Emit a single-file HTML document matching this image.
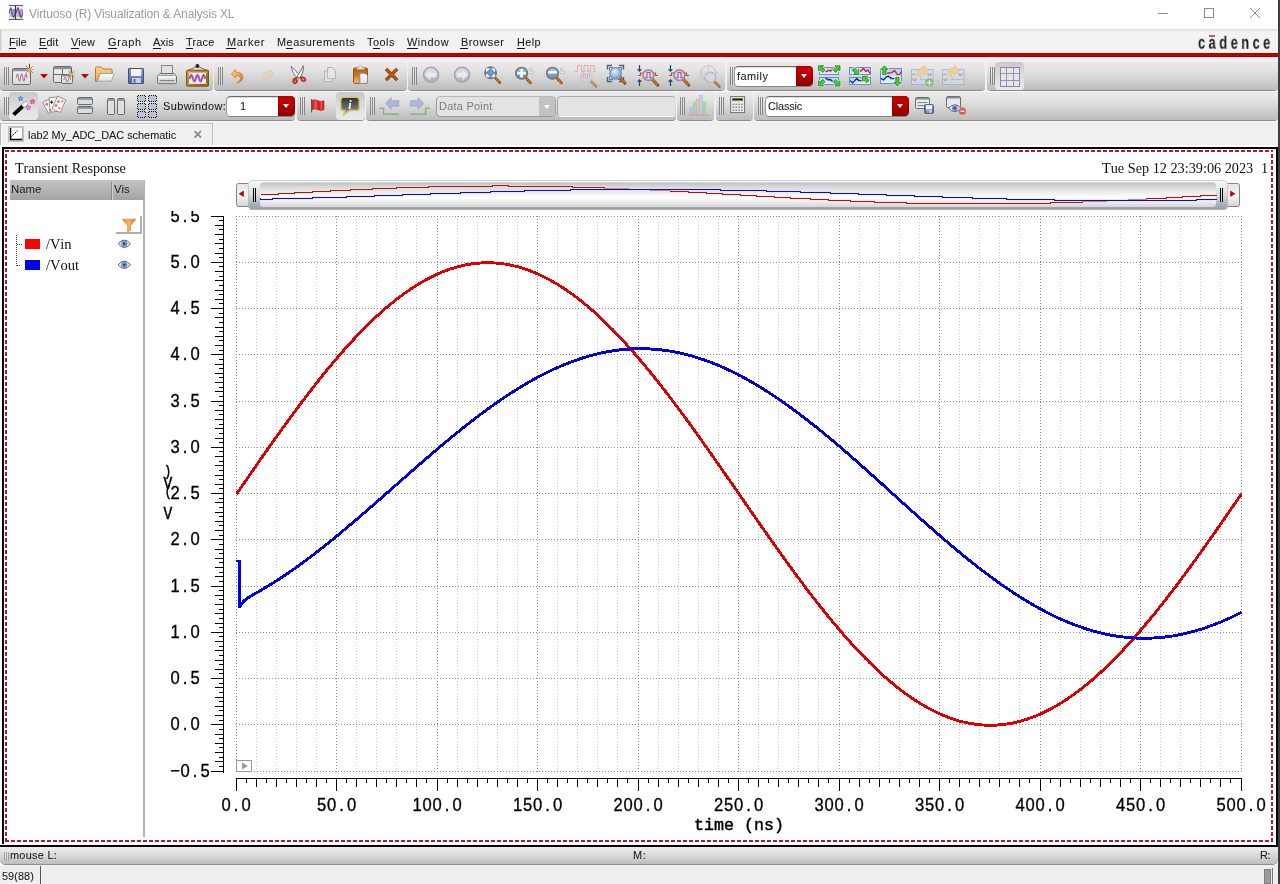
<!DOCTYPE html>
<html lang="en"><head><meta charset="utf-8"><title>Virtuoso (R) Visualization &amp; Analysis XL</title>
<style>
*{box-sizing:border-box}
html,body{margin:0;padding:0}
body{width:1280px;height:884px;overflow:hidden;background:#fff;position:relative;font-family:"Liberation Sans",sans-serif;font-size:11.6px;color:#1a1a1a}
.a{position:absolute}
.t{position:absolute;white-space:nowrap;line-height:1;will-change:transform}
.f{-webkit-text-stroke:.07px currentColor}
svg{will-change:transform}
u{text-decoration:underline;text-underline-offset:1.5px;text-decoration-thickness:1px}
#titlebar{left:0;top:0;width:1280px;height:29px;background:#fff}
#title{left:29px;top:7.5px;font-size:12px;color:#9c9c9c;letter-spacing:-.14px}
#menubar{left:0;top:29px;width:1278px;height:24px;background:linear-gradient(#d9d9d9 0,#eeeeee 2px,#f3f3f3 3px,#f1f1f1 100%)}
.mi{top:36px;font-size:11.6px;color:#1c1c1c}
#redline{left:0;top:51px;width:1278px;height:8px;background:linear-gradient(#f9eded 0px,#f9eded 1px,#ffeaea 1px,#ffeaea 2px,#9b0606 2px,#9b0606 3px,#b90505 3px,#b90505 4px,#bb0404 4px,#bb0404 5px,#9b0606 5px,#9b0606 6px,#ffeaea 6px,#ffeaea 7px,#f8ecec 7px,#f8ecec 8px)}
#tbbg{left:0;top:59px;width:1278px;height:86px;background:#f0f0f0}
.g{position:absolute;border-radius:4px;background:linear-gradient(#eaeaea 0,#e4e4e4 25%,#d3d3d3 60%,#bcbcbc 100%);box-shadow:0 1px 0 #8c8c8c,0 2px 0 #f6f6f6}
.g1{top:62px;height:28px}
.g2{top:92px;height:28px}
.h{position:absolute;width:5px;background:repeating-linear-gradient(90deg,#868686 0,#868686 1px,rgba(255,255,255,.25) 1px,rgba(255,255,255,.25) 2px)}
.h1{top:67px;height:18px}
.h2{top:97px;height:18px}
.pressed{position:absolute;border-radius:4px;background:linear-gradient(#c9c9c9,#d6d6d6 35%,#e6e6e6 80%,#e9e9e9)}
.ic{position:absolute;overflow:visible}
.combo{position:absolute;height:21px;border-radius:4.5px;background:#fff;border:1px solid #858585;border-top-color:#6e6e6e;border-left-color:#9a9a9a;box-shadow:inset 0 1px 0 #dcdcdc}
.combo .btn{position:absolute;right:-1px;top:-.5px;bottom:-.5px;width:16.5px;background:linear-gradient(#c60000,#b80000 45%,#9c0000 80%,#8c0000);border-radius:0 4.5px 4.5px 0;box-shadow:inset 0 0 0 .5px rgba(120,0,0,.6)}
.combo .btn:after{content:"";position:absolute;left:4.4px;top:8.1px;border:3.8px solid transparent;border-top:4.3px solid #fff;border-bottom:0}
.combo .tx{will-change:transform;position:absolute;left:3px;top:4.3px;font-size:11.4px;color:#111;line-height:1;white-space:nowrap}
#tab{left:0;top:123px;width:213px;height:22px;background:#f0f0f0;border-top:1px solid #c3c3c3;border-right:1px solid #bdbdbd;border-left:1px solid #b6b6b6;box-shadow:inset 1px 1px 0 #fbfbfb}
#gw{left:0;top:145px;width:1278px;height:702px;background:#fff}
.serif{font-family:"Liberation Serif",serif;font-kerning:none}
.mono{font-family:"Liberation Mono",monospace}
.ax{will-change:transform;position:absolute;white-space:nowrap;line-height:18px;height:18px;font-family:"Liberation Sans",sans-serif;font-size:16.6px;color:#000;letter-spacing:.77px;-webkit-text-stroke:.3px #000;transform:scaleY(1.125);transform-origin:0 50%}
.ax i,.ax b{display:inline-block;width:10px;text-align:center;font-style:normal;font-weight:normal;letter-spacing:0}
.ax i{-webkit-text-stroke:.8px #000}
#sb1{left:0;top:847px;width:1278px;height:17px;border-radius:0 0 5px 5px;background:linear-gradient(#ededed 0,#e2e2e2 30%,#cfcfcf 70%,#bdbdbd 100%);box-shadow:0 1px 0 #8f8f8f}
#sb2{left:0;top:865px;width:1278px;height:19px;background:#efefef}
</style></head>
<body>
<div id="titlebar" class="a"></div>
<div id="title" class="t">Virtuoso (R) Visualization &amp; Analysis XL</div>
<svg class="a" style="left:1150px;top:0" width="128" height="29" viewBox="0 0 128 29"><g fill="none" stroke="#8a8a8a" stroke-width="1"><path d="M8 13.5h10"/><rect x="54.5" y="8.5" width="9" height="9"/><path d="M100 8l10 10M110 8l-10 10"/></g></svg>
<div id="menubar" class="a"></div><div class="a" style="left:0;top:30px;width:2px;height:21px;background:linear-gradient(90deg,#cbcbcb 0,#cbcbcb 1px,#e2e2e2 1px)"></div>
<div class="t f" style="left:9.11px;top:36.6px;font-size:10.9px;letter-spacing:0.042px;color:#1a1a1a;">File</div><div class="a" style="left:8.7px;top:48px;width:7.5px;height:1px;background:#151515"></div><div class="t f" style="left:39.12px;top:36.6px;font-size:10.9px;letter-spacing:0.149px;color:#1a1a1a;">Edit</div><div class="a" style="left:38.7px;top:48px;width:8.1px;height:1px;background:#151515"></div><div class="t f" style="left:71.24px;top:36.6px;font-size:10.9px;letter-spacing:0.130px;color:#1a1a1a;">View</div><div class="a" style="left:70.8px;top:48px;width:7.9px;height:1px;background:#151515"></div><div class="t f" style="left:108.34px;top:36.6px;font-size:10.9px;letter-spacing:0.669px;color:#1a1a1a;">Graph</div><div class="a" style="left:107.9px;top:48px;width:9.3px;height:1px;background:#151515"></div><div class="t f" style="left:153.20px;top:36.6px;font-size:10.9px;letter-spacing:0.000px;color:#1a1a1a;">Axis</div><div class="a" style="left:152.8px;top:48px;width:8.1px;height:1px;background:#151515"></div><div class="t f" style="left:186.07px;top:36.6px;font-size:10.9px;letter-spacing:0.218px;color:#1a1a1a;">Trace</div><div class="a" style="left:185.7px;top:48px;width:7.1px;height:1px;background:#151515"></div><div class="t f" style="left:226.62px;top:36.6px;font-size:10.9px;letter-spacing:0.708px;color:#1a1a1a;">Marker</div><div class="a" style="left:226.2px;top:48px;width:9.9px;height:1px;background:#151515"></div><div class="t f" style="left:277.15px;top:36.6px;font-size:10.9px;letter-spacing:0.508px;color:#1a1a1a;">Measurements</div><div class="a" style="left:286.3px;top:48px;width:6.9px;height:1px;background:#151515"></div><div class="t f" style="left:367.24px;top:36.6px;font-size:10.9px;letter-spacing:0.496px;color:#1a1a1a;">Tools</div><div class="a" style="left:372.8px;top:48px;width:6.9px;height:1px;background:#151515"></div><div class="t f" style="left:407.06px;top:36.6px;font-size:10.9px;letter-spacing:0.572px;color:#1a1a1a;">Window</div><div class="a" style="left:406.6px;top:48px;width:11.1px;height:1px;background:#151515"></div><div class="t f" style="left:460.82px;top:36.6px;font-size:10.9px;letter-spacing:0.481px;color:#1a1a1a;">Browser</div><div class="a" style="left:460.4px;top:48px;width:8.1px;height:1px;background:#151515"></div><div class="t f" style="left:516.96px;top:36.6px;font-size:10.9px;letter-spacing:0.416px;color:#1a1a1a;">Help</div><div class="a" style="left:516.6px;top:48px;width:8.7px;height:1px;background:#151515"></div>
<div class="t" id="cad" style="left:1198.4px;top:32.6px;font-size:15px;font-weight:bold;letter-spacing:4.02px;color:#1a1a1a;transform:scale(.86,1.22);transform-origin:0 0">cadence</div><div class="a" style="left:1209px;top:35px;width:6px;height:1.5px;background:#c05a64"></div>
<div id="redline" class="a"></div>
<div id="tbbg" class="a"></div>
<div class="g g1" style="left:0px;width:213px"></div><div class="g g1" style="left:214px;width:193px"></div><div class="g g1" style="left:408px;width:317px"></div><div class="g g1" style="left:727px;width:258px"></div><div class="g g1" style="left:987px;width:291px"></div><div class="g g2" style="left:0px;width:295px"></div><div class="g g2" style="left:297px;width:68px"></div><div class="g g2" style="left:366px;width:310px"></div><div class="g g2" style="left:677px;width:37px"></div><div class="g g2" style="left:716px;width:37px"></div><div class="g g2" style="left:754px;width:524px"></div>
<div class="h h1" style="left:4px"></div><div class="h h1" style="left:218px"></div><div class="h h1" style="left:412px"></div><div class="h h1" style="left:730px"></div><div class="h h1" style="left:990px"></div><div class="h h2" style="left:4px"></div><div class="h h2" style="left:300px"></div><div class="h h2" style="left:370px"></div><div class="h h2" style="left:680px"></div><div class="h h2" style="left:719px"></div><div class="h h2" style="left:758px"></div>
<div class="pressed" style="left:995px;top:62px;width:29px;height:28px"></div><div class="pressed" style="left:9px;top:92px;width:29px;height:28px"></div><div class="pressed" style="left:336px;top:92px;width:29px;height:28px"></div>
<div class="t f" style="left:162.72px;top:101.3px;font-size:10.9px;letter-spacing:0.453px;color:#1a1a1a;">Subwindow:</div><div class="combo" style="left:225.8px;top:95.5px;width:69.2px"><div class="tx" style="left:13.6px;font-size:10.9px;top:4.1px">1</div><div class="btn"></div></div><div class="combo" style="left:733.8px;top:65.5px;width:79.2px"><div class="btn"></div></div><div class="t f" style="left:737.02px;top:71.4px;font-size:10.9px;letter-spacing:0.487px;color:#1a1a1a;">family</div><div class="combo" style="left:764.8px;top:95.5px;width:144.2px"><div class="btn"></div></div><div class="t f" style="left:767.94px;top:101.4px;font-size:10.9px;letter-spacing:-0.131px;color:#1a1a1a;">Classic</div><div class="a" style="left:436px;top:95.5px;width:120px;height:21px;border-radius:4.5px;background:#e3e3e3;border:1px solid #9a9a9a;border-top-color:#b9b9b9;border-right-color:#a4a4a4;overflow:hidden"><div class="a" style="right:0;top:0;width:16px;height:20px;background:#c2c2c2"></div><div class="a" style="right:4.6px;top:8.1px;border:3.8px solid transparent;border-top:4.2px solid #fff;border-bottom:0"></div></div><div class="t f" style="left:438.95px;top:101.4px;font-size:10.9px;letter-spacing:0.281px;color:#7f7f7f;">Data Point</div><div class="a" style="left:557px;top:95.5px;width:119px;height:21px;border-radius:4.5px;background:#e3e3e3;border:1px solid #a9a9a9;border-bottom-color:#fbfbfb;border-right-color:#d9d9d9"></div>
<div id="tab" class="a"></div><div class="t f" style="left:28.16px;top:130px;font-size:10.9px;letter-spacing:-0.006px;color:#1a1a1a;">lab2 My_ADC_DAC schematic</div><svg class="a" style="left:192.3px;top:129.4px" width="12" height="12" viewBox="0 0 12 12"><path d="M2.6 2.2l6.4 6.4M9 2.2l-6.4 6.4" stroke="#8a8a8a" stroke-width="1.7" fill="none"/></svg>
<div id="gw" class="a"></div>
<svg class="a" style="left:0;top:0" width="1280" height="884" viewBox="0 0 1280 884"><g shape-rendering="crispEdges"><rect x="2" y="147" width="1276" height="2" fill="#000"/><rect x="2" y="147" width="2" height="697" fill="#000"/><rect x="1276" y="147" width="2" height="700" fill="#000"/><rect x="0" y="845" width="1278" height="2" fill="#000"/><path d="M5 151H1273" stroke="#b01a36" stroke-width="2" stroke-dasharray="4 2" fill="none"/><path d="M5 841H1273" stroke="#b01a36" stroke-width="2" stroke-dasharray="4 2" fill="none"/><path d="M6 154V840" stroke="#b01a36" stroke-width="2" stroke-dasharray="4 2" fill="none"/><path d="M1272 154V840" stroke="#b01a36" stroke-width="2" stroke-dasharray="4 2" fill="none"/><rect x="143" y="180" width="2" height="657" fill="#b4b4b4"/><path d="M236.5 216V772" stroke="#8e8e8e" stroke-width="1" stroke-dasharray="1 2" fill="none"/><path d="M256.5 216V772" stroke="#cbcbcb" stroke-width="1" stroke-dasharray="1 2" fill="none"/><path d="M276.5 216V772" stroke="#cbcbcb" stroke-width="1" stroke-dasharray="1 2" fill="none"/><path d="M296.5 216V772" stroke="#cbcbcb" stroke-width="1" stroke-dasharray="1 2" fill="none"/><path d="M316.5 216V772" stroke="#cbcbcb" stroke-width="1" stroke-dasharray="1 2" fill="none"/><path d="M336.5 216V772" stroke="#8e8e8e" stroke-width="1" stroke-dasharray="1 2" fill="none"/><path d="M356.5 216V772" stroke="#cbcbcb" stroke-width="1" stroke-dasharray="1 2" fill="none"/><path d="M376.5 216V772" stroke="#cbcbcb" stroke-width="1" stroke-dasharray="1 2" fill="none"/><path d="M396.5 216V772" stroke="#cbcbcb" stroke-width="1" stroke-dasharray="1 2" fill="none"/><path d="M416.5 216V772" stroke="#cbcbcb" stroke-width="1" stroke-dasharray="1 2" fill="none"/><path d="M437.5 216V772" stroke="#8e8e8e" stroke-width="1" stroke-dasharray="1 2" fill="none"/><path d="M457.5 216V772" stroke="#cbcbcb" stroke-width="1" stroke-dasharray="1 2" fill="none"/><path d="M477.5 216V772" stroke="#cbcbcb" stroke-width="1" stroke-dasharray="1 2" fill="none"/><path d="M497.5 216V772" stroke="#cbcbcb" stroke-width="1" stroke-dasharray="1 2" fill="none"/><path d="M517.5 216V772" stroke="#cbcbcb" stroke-width="1" stroke-dasharray="1 2" fill="none"/><path d="M537.5 216V772" stroke="#8e8e8e" stroke-width="1" stroke-dasharray="1 2" fill="none"/><path d="M557.5 216V772" stroke="#cbcbcb" stroke-width="1" stroke-dasharray="1 2" fill="none"/><path d="M577.5 216V772" stroke="#cbcbcb" stroke-width="1" stroke-dasharray="1 2" fill="none"/><path d="M597.5 216V772" stroke="#cbcbcb" stroke-width="1" stroke-dasharray="1 2" fill="none"/><path d="M617.5 216V772" stroke="#cbcbcb" stroke-width="1" stroke-dasharray="1 2" fill="none"/><path d="M638.5 216V772" stroke="#8e8e8e" stroke-width="1" stroke-dasharray="1 2" fill="none"/><path d="M658.5 216V772" stroke="#cbcbcb" stroke-width="1" stroke-dasharray="1 2" fill="none"/><path d="M678.5 216V772" stroke="#cbcbcb" stroke-width="1" stroke-dasharray="1 2" fill="none"/><path d="M698.5 216V772" stroke="#cbcbcb" stroke-width="1" stroke-dasharray="1 2" fill="none"/><path d="M718.5 216V772" stroke="#cbcbcb" stroke-width="1" stroke-dasharray="1 2" fill="none"/><path d="M738.5 216V772" stroke="#8e8e8e" stroke-width="1" stroke-dasharray="1 2" fill="none"/><path d="M758.5 216V772" stroke="#cbcbcb" stroke-width="1" stroke-dasharray="1 2" fill="none"/><path d="M778.5 216V772" stroke="#cbcbcb" stroke-width="1" stroke-dasharray="1 2" fill="none"/><path d="M798.5 216V772" stroke="#cbcbcb" stroke-width="1" stroke-dasharray="1 2" fill="none"/><path d="M818.5 216V772" stroke="#cbcbcb" stroke-width="1" stroke-dasharray="1 2" fill="none"/><path d="M839.5 216V772" stroke="#8e8e8e" stroke-width="1" stroke-dasharray="1 2" fill="none"/><path d="M859.5 216V772" stroke="#cbcbcb" stroke-width="1" stroke-dasharray="1 2" fill="none"/><path d="M879.5 216V772" stroke="#cbcbcb" stroke-width="1" stroke-dasharray="1 2" fill="none"/><path d="M899.5 216V772" stroke="#cbcbcb" stroke-width="1" stroke-dasharray="1 2" fill="none"/><path d="M919.5 216V772" stroke="#cbcbcb" stroke-width="1" stroke-dasharray="1 2" fill="none"/><path d="M939.5 216V772" stroke="#8e8e8e" stroke-width="1" stroke-dasharray="1 2" fill="none"/><path d="M959.5 216V772" stroke="#cbcbcb" stroke-width="1" stroke-dasharray="1 2" fill="none"/><path d="M979.5 216V772" stroke="#cbcbcb" stroke-width="1" stroke-dasharray="1 2" fill="none"/><path d="M999.5 216V772" stroke="#cbcbcb" stroke-width="1" stroke-dasharray="1 2" fill="none"/><path d="M1019.5 216V772" stroke="#cbcbcb" stroke-width="1" stroke-dasharray="1 2" fill="none"/><path d="M1040.5 216V772" stroke="#8e8e8e" stroke-width="1" stroke-dasharray="1 2" fill="none"/><path d="M1060.5 216V772" stroke="#cbcbcb" stroke-width="1" stroke-dasharray="1 2" fill="none"/><path d="M1080.5 216V772" stroke="#cbcbcb" stroke-width="1" stroke-dasharray="1 2" fill="none"/><path d="M1100.5 216V772" stroke="#cbcbcb" stroke-width="1" stroke-dasharray="1 2" fill="none"/><path d="M1120.5 216V772" stroke="#cbcbcb" stroke-width="1" stroke-dasharray="1 2" fill="none"/><path d="M1140.5 216V772" stroke="#8e8e8e" stroke-width="1" stroke-dasharray="1 2" fill="none"/><path d="M1160.5 216V772" stroke="#cbcbcb" stroke-width="1" stroke-dasharray="1 2" fill="none"/><path d="M1180.5 216V772" stroke="#cbcbcb" stroke-width="1" stroke-dasharray="1 2" fill="none"/><path d="M1200.5 216V772" stroke="#cbcbcb" stroke-width="1" stroke-dasharray="1 2" fill="none"/><path d="M1220.5 216V772" stroke="#cbcbcb" stroke-width="1" stroke-dasharray="1 2" fill="none"/><path d="M1241.5 216V772" stroke="#8e8e8e" stroke-width="1" stroke-dasharray="1 2" fill="none"/><path d="M236 216.5H1242" stroke="#8e8e8e" stroke-width="1" stroke-dasharray="1 2" fill="none"/><path d="M236 262.5H1242" stroke="#8e8e8e" stroke-width="1" stroke-dasharray="1 2" fill="none"/><path d="M236 308.5H1242" stroke="#8e8e8e" stroke-width="1" stroke-dasharray="1 2" fill="none"/><path d="M236 354.5H1242" stroke="#8e8e8e" stroke-width="1" stroke-dasharray="1 2" fill="none"/><path d="M236 401.5H1242" stroke="#8e8e8e" stroke-width="1" stroke-dasharray="1 2" fill="none"/><path d="M236 447.5H1242" stroke="#8e8e8e" stroke-width="1" stroke-dasharray="1 2" fill="none"/><path d="M236 493.5H1242" stroke="#8e8e8e" stroke-width="1" stroke-dasharray="1 2" fill="none"/><path d="M236 539.5H1242" stroke="#8e8e8e" stroke-width="1" stroke-dasharray="1 2" fill="none"/><path d="M236 586.5H1242" stroke="#8e8e8e" stroke-width="1" stroke-dasharray="1 2" fill="none"/><path d="M236 632.5H1242" stroke="#8e8e8e" stroke-width="1" stroke-dasharray="1 2" fill="none"/><path d="M236 678.5H1242" stroke="#8e8e8e" stroke-width="1" stroke-dasharray="1 2" fill="none"/><path d="M236 724.5H1242" stroke="#8e8e8e" stroke-width="1" stroke-dasharray="1 2" fill="none"/><path d="M236 771.5H1242" stroke="#8e8e8e" stroke-width="1" stroke-dasharray="1 2" fill="none"/><path d="M223.5 216V773M211 216.5H224M219 220.5H224M215 225.5H224M219 229.5H224M215 234.5H224M219 239.5H224M215 243.5H224M219 248.5H224M215 253.5H224M219 257.5H224M211 262.5H224M219 266.5H224M215 271.5H224M219 276.5H224M215 280.5H224M219 285.5H224M215 290.5H224M219 294.5H224M215 299.5H224M219 303.5H224M211 308.5H224M219 313.5H224M215 317.5H224M219 322.5H224M215 327.5H224M219 331.5H224M215 336.5H224M219 340.5H224M215 345.5H224M219 350.5H224M211 354.5H224M219 359.5H224M215 364.5H224M219 368.5H224M215 373.5H224M219 377.5H224M215 382.5H224M219 387.5H224M215 391.5H224M219 396.5H224M211 401.5H224M219 405.5H224M215 410.5H224M219 414.5H224M215 419.5H224M219 424.5H224M215 428.5H224M219 433.5H224M215 438.5H224M219 442.5H224M211 447.5H224M219 451.5H224M215 456.5H224M219 461.5H224M215 465.5H224M219 470.5H224M215 475.5H224M219 479.5H224M215 484.5H224M219 488.5H224M211 493.5H224M219 498.5H224M215 502.5H224M219 507.5H224M215 512.5H224M219 516.5H224M215 521.5H224M219 525.5H224M215 530.5H224M219 535.5H224M211 539.5H224M219 544.5H224M215 549.5H224M219 553.5H224M215 558.5H224M219 562.5H224M215 567.5H224M219 572.5H224M215 576.5H224M219 581.5H224M211 586.5H224M219 590.5H224M215 595.5H224M219 599.5H224M215 604.5H224M219 609.5H224M215 613.5H224M219 618.5H224M215 623.5H224M219 627.5H224M211 632.5H224M219 636.5H224M215 641.5H224M219 646.5H224M215 650.5H224M219 655.5H224M215 660.5H224M219 664.5H224M215 669.5H224M219 673.5H224M211 678.5H224M219 683.5H224M215 687.5H224M219 692.5H224M215 697.5H224M219 701.5H224M215 706.5H224M219 710.5H224M215 715.5H224M219 720.5H224M211 724.5H224M219 729.5H224M215 734.5H224M219 738.5H224M215 743.5H224M219 747.5H224M215 752.5H224M219 757.5H224M215 761.5H224M219 766.5H224M211 771.5H224" stroke="#000" stroke-width="1" fill="none"/><path d="M236 778.5H1242M236.5 778V791M246.5 778V783M256.5 778V787M266.5 778V783M276.5 778V787M286.5 778V783M296.5 778V787M306.5 778V783M316.5 778V787M326.5 778V783M336.5 778V791M346.5 778V783M356.5 778V787M366.5 778V783M376.5 778V787M386.5 778V783M396.5 778V787M406.5 778V783M416.5 778V787M426.5 778V783M437.5 778V791M447.5 778V783M457.5 778V787M467.5 778V783M477.5 778V787M487.5 778V783M497.5 778V787M507.5 778V783M517.5 778V787M527.5 778V783M537.5 778V791M547.5 778V783M557.5 778V787M567.5 778V783M577.5 778V787M587.5 778V783M597.5 778V787M607.5 778V783M617.5 778V787M627.5 778V783M638.5 778V791M648.5 778V783M658.5 778V787M668.5 778V783M678.5 778V787M688.5 778V783M698.5 778V787M708.5 778V783M718.5 778V787M728.5 778V783M738.5 778V791M748.5 778V783M758.5 778V787M768.5 778V783M778.5 778V787M788.5 778V783M798.5 778V787M808.5 778V783M818.5 778V787M828.5 778V783M839.5 778V791M849.5 778V783M859.5 778V787M869.5 778V783M879.5 778V787M889.5 778V783M899.5 778V787M909.5 778V783M919.5 778V787M929.5 778V783M939.5 778V791M949.5 778V783M959.5 778V787M969.5 778V783M979.5 778V787M989.5 778V783M999.5 778V787M1009.5 778V783M1019.5 778V787M1029.5 778V783M1040.5 778V791M1050.5 778V783M1060.5 778V787M1070.5 778V783M1080.5 778V787M1090.5 778V783M1100.5 778V787M1110.5 778V783M1120.5 778V787M1130.5 778V783M1140.5 778V791M1150.5 778V783M1160.5 778V787M1170.5 778V783M1180.5 778V787M1190.5 778V783M1200.5 778V787M1210.5 778V783M1220.5 778V787M1230.5 778V783M1241.5 778V791" stroke="#000" stroke-width="1" fill="none"/></g><clipPath id="plotclip"><rect x="236" y="210" width="1006" height="566"/></clipPath><g clip-path="url(#plotclip)" shape-rendering="crispEdges" fill="none" stroke-width="2.9" stroke-linejoin="bevel"><path d="M236.5,494.0 237.9,491.9 239.4,489.8 240.8,487.8 242.2,485.7 243.7,483.6 245.1,481.6 246.6,479.5 248.0,477.4 249.4,475.3 250.9,473.3 252.3,471.2 253.7,469.1 255.2,467.1 256.6,465.0 258.0,463.0 259.5,460.9 260.9,458.8 262.3,456.8 263.8,454.8 265.2,452.7 266.6,450.7 268.1,448.6 269.5,446.6 271.0,444.6 272.4,442.5 273.8,440.5 275.3,438.5 276.7,436.5 278.1,434.5 279.6,432.5 281.0,430.5 282.4,428.5 283.9,426.5 285.3,424.5 286.8,422.5 288.2,420.6 289.6,418.6 291.1,416.6 292.5,414.7 293.9,412.7 295.4,410.8 296.8,408.9 298.2,406.9 299.7,405.0 301.1,403.1 302.5,401.2 304.0,399.3 305.4,397.4 306.9,395.5 308.3,393.7 309.7,391.8 311.2,389.9 312.6,388.1 314.0,386.3 315.5,384.4 316.9,382.6 318.3,380.8 319.8,379.0 321.2,377.2 322.6,375.4 324.1,373.6 325.5,371.8 326.9,370.1 328.4,368.3 329.8,366.6 331.3,364.9 332.7,363.2 334.1,361.5 335.6,359.8 337.0,358.1 338.4,356.4 339.9,354.7 341.3,353.1 342.7,351.4 344.2,349.8 345.6,348.2 347.0,346.6 348.5,345.0 349.9,343.4 351.4,341.9 352.8,340.3 354.2,338.8 355.7,337.2 357.1,335.7 358.5,334.2 360.0,332.7 361.4,331.2 362.8,329.7 364.3,328.3 365.7,326.9 367.1,325.4 368.6,324.0 370.0,322.6 371.5,321.2 372.9,319.9 374.3,318.5 375.8,317.1 377.2,315.8 378.6,314.5 380.1,313.2 381.5,311.9 382.9,310.6 384.4,309.4 385.8,308.1 387.2,306.9 388.7,305.7 390.1,304.5 391.6,303.3 393.0,302.2 394.4,301.0 395.9,299.9 397.3,298.7 398.7,297.6 400.2,296.6 401.6,295.5 403.0,294.4 404.5,293.4 405.9,292.4 407.4,291.4 408.8,290.4 410.2,289.4 411.7,288.4 413.1,287.5 414.5,286.6 416.0,285.7 417.4,284.8 418.8,283.9 420.3,283.0 421.7,282.2 423.1,281.4 424.6,280.6 426.0,279.8 427.4,279.0 428.9,278.2 430.3,277.5 431.8,276.8 433.2,276.1 434.6,275.4 436.1,274.7 437.5,274.1 438.9,273.4 440.4,272.8 441.8,272.2 443.2,271.6 444.7,271.1 446.1,270.5 447.5,270.0 449.0,269.5 450.4,269.0 451.9,268.5 453.3,268.1 454.7,267.7 456.2,267.2 457.6,266.8 459.0,266.5 460.5,266.1 461.9,265.8 463.3,265.4 464.8,265.1 466.2,264.8 467.6,264.6 469.1,264.3 470.5,264.1 472.0,263.9 473.4,263.7 474.8,263.5 476.3,263.3 477.7,263.2 479.1,263.1 480.6,263.0 482.0,262.9 483.4,262.8 484.9,262.8 486.3,262.8 487.8,262.8 489.2,262.8 490.6,262.8 492.1,262.8 493.5,262.9 494.9,263.0 496.4,263.1 497.8,263.2 499.2,263.3 500.7,263.5 502.1,263.7 503.5,263.9 505.0,264.1 506.4,264.3 507.8,264.6 509.3,264.8 510.7,265.1 512.2,265.4 513.6,265.8 515.0,266.1 516.5,266.5 517.9,266.8 519.3,267.2 520.8,267.7 522.2,268.1 523.6,268.5 525.1,269.0 526.5,269.5 528.0,270.0 529.4,270.5 530.8,271.1 532.3,271.6 533.7,272.2 535.1,272.8 536.6,273.4 538.0,274.1 539.4,274.7 540.9,275.4 542.3,276.1 543.7,276.8 545.2,277.5 546.6,278.2 548.0,279.0 549.5,279.8 550.9,280.6 552.4,281.4 553.8,282.2 555.2,283.0 556.7,283.9 558.1,284.8 559.5,285.7 561.0,286.6 562.4,287.5 563.8,288.4 565.3,289.4 566.7,290.4 568.1,291.4 569.6,292.4 571.0,293.4 572.5,294.4 573.9,295.5 575.3,296.6 576.8,297.6 578.2,298.7 579.6,299.9 581.1,301.0 582.5,302.2 583.9,303.3 585.4,304.5 586.8,305.7 588.2,306.9 589.7,308.1 591.1,309.4 592.6,310.6 594.0,311.9 595.4,313.2 596.9,314.5 598.3,315.8 599.7,317.1 601.2,318.5 602.6,319.9 604.0,321.2 605.5,322.6 606.9,324.0 608.3,325.4 609.8,326.9 611.2,328.3 612.7,329.7 614.1,331.2 615.5,332.7 617.0,334.2 618.4,335.7 619.8,337.2 621.3,338.8 622.7,340.3 624.1,341.9 625.6,343.4 627.0,345.0 628.4,346.6 629.9,348.2 631.3,349.8 632.8,351.4 634.2,353.1 635.6,354.7 637.1,356.4 638.5,358.1 639.9,359.8 641.4,361.5 642.8,363.2 644.2,364.9 645.7,366.6 647.1,368.3 648.5,370.1 650.0,371.8 651.4,373.6 652.9,375.4 654.3,377.2 655.7,379.0 657.2,380.8 658.6,382.6 660.0,384.4 661.5,386.3 662.9,388.1 664.3,389.9 665.8,391.8 667.2,393.7 668.6,395.5 670.1,397.4 671.5,399.3 673.0,401.2 674.4,403.1 675.8,405.0 677.3,406.9 678.7,408.9 680.1,410.8 681.6,412.7 683.0,414.7 684.4,416.6 685.9,418.6 687.3,420.6 688.8,422.5 690.2,424.5 691.6,426.5 693.1,428.5 694.5,430.5 695.9,432.5 697.4,434.5 698.8,436.5 700.2,438.5 701.7,440.5 703.1,442.5 704.5,444.6 706.0,446.6 707.4,448.6 708.8,450.7 710.3,452.7 711.7,454.8 713.2,456.8 714.6,458.8 716.0,460.9 717.5,463.0 718.9,465.0 720.3,467.1 721.8,469.1 723.2,471.2 724.6,473.3 726.1,475.3 727.5,477.4 728.9,479.5 730.4,481.6 731.8,483.6 733.3,485.7 734.7,487.8 736.1,489.8 737.6,491.9 739.0,494.0 740.4,496.1 741.9,498.2 743.3,500.2 744.7,502.3 746.2,504.4 747.6,506.4 749.0,508.5 750.5,510.6 751.9,512.7 753.4,514.7 754.8,516.8 756.2,518.9 757.7,520.9 759.1,523.0 760.5,525.0 762.0,527.1 763.4,529.2 764.8,531.2 766.3,533.2 767.7,535.3 769.1,537.3 770.6,539.4 772.0,541.4 773.5,543.4 774.9,545.5 776.3,547.5 777.8,549.5 779.2,551.5 780.6,553.5 782.1,555.5 783.5,557.5 784.9,559.5 786.4,561.5 787.8,563.5 789.2,565.5 790.7,567.4 792.1,569.4 793.6,571.4 795.0,573.3 796.4,575.3 797.9,577.2 799.3,579.1 800.7,581.1 802.2,583.0 803.6,584.9 805.0,586.8 806.5,588.7 807.9,590.6 809.3,592.5 810.8,594.3 812.2,596.2 813.7,598.1 815.1,599.9 816.5,601.7 818.0,603.6 819.4,605.4 820.8,607.2 822.3,609.0 823.7,610.8 825.1,612.6 826.6,614.4 828.0,616.2 829.4,617.9 830.9,619.7 832.3,621.4 833.8,623.1 835.2,624.8 836.6,626.5 838.1,628.2 839.5,629.9 840.9,631.6 842.4,633.3 843.8,634.9 845.2,636.6 846.7,638.2 848.1,639.8 849.5,641.4 851.0,643.0 852.4,644.6 853.9,646.1 855.3,647.7 856.7,649.2 858.2,650.8 859.6,652.3 861.0,653.8 862.5,655.3 863.9,656.8 865.3,658.3 866.8,659.7 868.2,661.1 869.6,662.6 871.1,664.0 872.5,665.4 874.0,666.8 875.4,668.1 876.8,669.5 878.3,670.9 879.7,672.2 881.1,673.5 882.6,674.8 884.0,676.1 885.4,677.4 886.9,678.6 888.3,679.9 889.7,681.1 891.2,682.3 892.6,683.5 894.1,684.7 895.5,685.8 896.9,687.0 898.4,688.1 899.8,689.3 901.2,690.4 902.7,691.4 904.1,692.5 905.5,693.6 907.0,694.6 908.4,695.6 909.8,696.6 911.3,697.6 912.7,698.6 914.2,699.6 915.6,700.5 917.0,701.4 918.5,702.3 919.9,703.2 921.3,704.1 922.8,705.0 924.2,705.8 925.6,706.6 927.1,707.4 928.5,708.2 929.9,709.0 931.4,709.8 932.8,710.5 934.3,711.2 935.7,711.9 937.1,712.6 938.6,713.3 940.0,713.9 941.4,714.6 942.9,715.2 944.3,715.8 945.7,716.4 947.2,716.9 948.6,717.5 950.0,718.0 951.5,718.5 952.9,719.0 954.4,719.5 955.8,719.9 957.2,720.3 958.7,720.8 960.1,721.2 961.5,721.5 963.0,721.9 964.4,722.2 965.8,722.6 967.3,722.9 968.7,723.2 970.1,723.4 971.6,723.7 973.0,723.9 974.5,724.1 975.9,724.3 977.3,724.5 978.8,724.7 980.2,724.8 981.6,724.9 983.1,725.0 984.5,725.1 985.9,725.2 987.4,725.2 988.8,725.2 990.2,725.2 991.7,725.2 993.1,725.2 994.6,725.2 996.0,725.1 997.4,725.0 998.9,724.9 1000.3,724.8 1001.7,724.7 1003.2,724.5 1004.6,724.3 1006.0,724.1 1007.5,723.9 1008.9,723.7 1010.3,723.4 1011.8,723.2 1013.2,722.9 1014.7,722.6 1016.1,722.2 1017.5,721.9 1019.0,721.5 1020.4,721.2 1021.8,720.8 1023.3,720.3 1024.7,719.9 1026.1,719.5 1027.6,719.0 1029.0,718.5 1030.4,718.0 1031.9,717.5 1033.3,716.9 1034.8,716.4 1036.2,715.8 1037.6,715.2 1039.1,714.6 1040.5,713.9 1041.9,713.3 1043.4,712.6 1044.8,711.9 1046.2,711.2 1047.7,710.5 1049.1,709.8 1050.5,709.0 1052.0,708.2 1053.4,707.4 1054.9,706.6 1056.3,705.8 1057.7,705.0 1059.2,704.1 1060.6,703.2 1062.0,702.3 1063.5,701.4 1064.9,700.5 1066.3,699.6 1067.8,698.6 1069.2,697.6 1070.6,696.6 1072.1,695.6 1073.5,694.6 1075.0,693.6 1076.4,692.5 1077.8,691.4 1079.3,690.4 1080.7,689.3 1082.1,688.1 1083.6,687.0 1085.0,685.8 1086.4,684.7 1087.9,683.5 1089.3,682.3 1090.8,681.1 1092.2,679.9 1093.6,678.6 1095.1,677.4 1096.5,676.1 1097.9,674.8 1099.4,673.5 1100.8,672.2 1102.2,670.9 1103.7,669.5 1105.1,668.1 1106.5,666.8 1108.0,665.4 1109.4,664.0 1110.8,662.6 1112.3,661.1 1113.7,659.7 1115.2,658.3 1116.6,656.8 1118.0,655.3 1119.5,653.8 1120.9,652.3 1122.3,650.8 1123.8,649.2 1125.2,647.7 1126.6,646.1 1128.1,644.6 1129.5,643.0 1130.9,641.4 1132.4,639.8 1133.8,638.2 1135.3,636.6 1136.7,634.9 1138.1,633.3 1139.6,631.6 1141.0,629.9 1142.4,628.2 1143.9,626.5 1145.3,624.8 1146.7,623.1 1148.2,621.4 1149.6,619.7 1151.0,617.9 1152.5,616.2 1153.9,614.4 1155.4,612.6 1156.8,610.8 1158.2,609.0 1159.7,607.2 1161.1,605.4 1162.5,603.6 1164.0,601.7 1165.4,599.9 1166.8,598.1 1168.3,596.2 1169.7,594.3 1171.1,592.5 1172.6,590.6 1174.0,588.7 1175.5,586.8 1176.9,584.9 1178.3,583.0 1179.8,581.1 1181.2,579.1 1182.6,577.2 1184.1,575.3 1185.5,573.3 1186.9,571.4 1188.4,569.4 1189.8,567.4 1191.2,565.5 1192.7,563.5 1194.1,561.5 1195.6,559.5 1197.0,557.5 1198.4,555.5 1199.9,553.5 1201.3,551.5 1202.7,549.5 1204.2,547.5 1205.6,545.5 1207.0,543.4 1208.5,541.4 1209.9,539.4 1211.3,537.3 1212.8,535.3 1214.2,533.2 1215.7,531.2 1217.1,529.2 1218.5,527.1 1220.0,525.0 1221.4,523.0 1222.8,520.9 1224.3,518.9 1225.7,516.8 1227.1,514.7 1228.6,512.7 1230.0,510.6 1231.4,508.5 1232.9,506.4 1234.3,504.4 1235.8,502.3 1237.2,500.2 1238.6,498.2 1240.1,496.1 1241.5,494.0" stroke="#de0000"/><path d="M239.5,606.5 239.7,607.0 240.8,604.9 241.9,603.3 243.1,602.0 244.2,600.8 245.3,599.9 246.4,599.0 247.5,598.2 248.6,597.5 249.7,596.8 250.8,596.1 252.0,595.5 253.1,594.8 254.2,594.2 255.3,593.5 256.4,592.9 257.5,592.3 258.6,591.6 259.8,591.0 260.9,590.3 262.0,589.7 263.1,589.0 264.2,588.4 265.3,587.7 266.4,587.0 267.5,586.4 268.7,585.7 269.8,585.0 270.9,584.3 272.0,583.6 273.1,582.9 274.2,582.2 275.3,581.5 276.4,580.8 277.6,580.1 278.7,579.4 279.8,578.6 280.9,577.9 282.0,577.2 283.1,576.4 284.2,575.7 285.4,574.9 286.5,574.2 287.6,573.4 288.7,572.7 289.8,571.9 290.9,571.1 292.0,570.3 293.1,569.6 294.3,568.8 295.4,568.0 296.5,567.2 297.6,566.4 298.7,565.6 299.8,564.8 300.9,564.0 302.0,563.2 303.2,562.4 304.3,561.5 305.4,560.7 306.5,559.9 307.6,559.0 308.7,558.2 309.8,557.4 311.0,556.5 312.1,555.7 313.2,554.8 314.3,554.0 315.4,553.1 316.5,552.3 317.6,551.4 318.7,550.5 319.9,549.7 321.0,548.8 322.1,547.9 323.2,547.0 324.3,546.1 325.4,545.2 326.5,544.4 327.7,543.5 328.8,542.6 329.9,541.7 331.0,540.8 332.1,539.9 333.2,539.0 334.3,538.1 335.4,537.1 336.6,536.2 337.7,535.3 338.8,534.4 339.9,533.5 341.0,532.5 342.1,531.6 343.2,530.7 344.3,529.8 345.5,528.8 346.6,527.9 347.7,527.0 348.8,526.0 349.9,525.1 351.0,524.1 352.1,523.2 353.3,522.2 354.4,521.3 355.5,520.3 356.6,519.4 357.7,518.4 358.8,517.5 359.9,516.5 361.0,515.6 362.2,514.6 363.3,513.6 364.4,512.7 365.5,511.7 366.6,510.8 367.7,509.8 368.8,508.8 369.9,507.9 371.1,506.9 372.2,505.9 373.3,504.9 374.4,504.0 375.5,503.0 376.6,502.0 377.7,501.1 378.9,500.1 380.0,499.1 381.1,498.1 382.2,497.1 383.3,496.2 384.4,495.2 385.5,494.2 386.6,493.2 387.8,492.3 388.9,491.3 390.0,490.3 391.1,489.3 392.2,488.3 393.3,487.4 394.4,486.4 395.5,485.4 396.7,484.4 397.8,483.4 398.9,482.5 400.0,481.5 401.1,480.5 402.2,479.5 403.3,478.5 404.5,477.6 405.6,476.6 406.7,475.6 407.8,474.6 408.9,473.7 410.0,472.7 411.1,471.7 412.2,470.7 413.4,469.8 414.5,468.8 415.6,467.8 416.7,466.8 417.8,465.9 418.9,464.9 420.0,463.9 421.2,463.0 422.3,462.0 423.4,461.0 424.5,460.1 425.6,459.1 426.7,458.2 427.8,457.2 428.9,456.3 430.1,455.3 431.2,454.3 432.3,453.4 433.4,452.4 434.5,451.5 435.6,450.6 436.7,449.6 437.8,448.7 439.0,447.7 440.1,446.8 441.2,445.8 442.3,444.9 443.4,444.0 444.5,443.1 445.6,442.1 446.8,441.2 447.9,440.3 449.0,439.4 450.1,438.4 451.2,437.5 452.3,436.6 453.4,435.7 454.5,434.8 455.7,433.9 456.8,433.0 457.9,432.1 459.0,431.2 460.1,430.3 461.2,429.4 462.3,428.5 463.4,427.6 464.6,426.7 465.7,425.9 466.8,425.0 467.9,424.1 469.0,423.2 470.1,422.4 471.2,421.5 472.4,420.6 473.5,419.8 474.6,418.9 475.7,418.1 476.8,417.2 477.9,416.4 479.0,415.5 480.1,414.7 481.3,413.9 482.4,413.0 483.5,412.2 484.6,411.4 485.7,410.6 486.8,409.8 487.9,409.0 489.0,408.1 490.2,407.3 491.3,406.5 492.4,405.8 493.5,405.0 494.6,404.2 495.7,403.4 496.8,402.6 498.0,401.8 499.1,401.1 500.2,400.3 501.3,399.5 502.4,398.8 503.5,398.0 504.6,397.3 505.7,396.5 506.9,395.8 508.0,395.1 509.1,394.3 510.2,393.6 511.3,392.9 512.4,392.2 513.5,391.5 514.7,390.8 515.8,390.1 516.9,389.4 518.0,388.7 519.1,388.0 520.2,387.3 521.3,386.6 522.4,386.0 523.6,385.3 524.7,384.6 525.8,384.0 526.9,383.3 528.0,382.7 529.1,382.0 530.2,381.4 531.3,380.8 532.5,380.2 533.6,379.5 534.7,378.9 535.8,378.3 536.9,377.7 538.0,377.1 539.1,376.5 540.3,375.9 541.4,375.4 542.5,374.8 543.6,374.2 544.7,373.7 545.8,373.1 546.9,372.5 548.0,372.0 549.2,371.5 550.3,370.9 551.4,370.4 552.5,369.9 553.6,369.3 554.7,368.8 555.8,368.3 556.9,367.8 558.1,367.3 559.2,366.8 560.3,366.4 561.4,365.9 562.5,365.4 563.6,365.0 564.7,364.5 565.9,364.0 567.0,363.6 568.1,363.2 569.2,362.7 570.3,362.3 571.4,361.9 572.5,361.5 573.6,361.1 574.8,360.7 575.9,360.3 577.0,359.9 578.1,359.5 579.2,359.1 580.3,358.7 581.4,358.4 582.5,358.0 583.7,357.7 584.8,357.3 585.9,357.0 587.0,356.7 588.1,356.3 589.2,356.0 590.3,355.7 591.5,355.4 592.6,355.1 593.7,354.8 594.8,354.5 595.9,354.3 597.0,354.0 598.1,353.7 599.2,353.5 600.4,353.2 601.5,353.0 602.6,352.7 603.7,352.5 604.8,352.3 605.9,352.1 607.0,351.8 608.1,351.6 609.3,351.4 610.4,351.3 611.5,351.1 612.6,350.9 613.7,350.7 614.8,350.6 615.9,350.4 617.1,350.3 618.2,350.1 619.3,350.0 620.4,349.8 621.5,349.7 622.6,349.6 623.7,349.5 624.8,349.4 626.0,349.3 627.1,349.2 628.2,349.1 629.3,349.1 630.4,349.0 631.5,348.9 632.6,348.9 633.8,348.8 634.9,348.8 636.0,348.8 637.1,348.7 638.2,348.7 639.3,348.7 640.4,348.7 641.5,348.7 642.7,348.7 643.8,348.7 644.9,348.8 646.0,348.8 647.1,348.8 648.2,348.9 649.3,348.9 650.4,349.0 651.6,349.1 652.7,349.1 653.8,349.2 654.9,349.3 656.0,349.4 657.1,349.5 658.2,349.6 659.4,349.7 660.5,349.8 661.6,350.0 662.7,350.1 663.8,350.2 664.9,350.4 666.0,350.5 667.1,350.7 668.3,350.9 669.4,351.0 670.5,351.2 671.6,351.4 672.7,351.6 673.8,351.8 674.9,352.0 676.0,352.2 677.2,352.5 678.3,352.7 679.4,352.9 680.5,353.2 681.6,353.4 682.7,353.7 683.8,353.9 685.0,354.2 686.1,354.5 687.2,354.8 688.3,355.1 689.4,355.4 690.5,355.7 691.6,356.0 692.7,356.3 693.9,356.6 695.0,357.0 696.1,357.3 697.2,357.6 698.3,358.0 699.4,358.3 700.5,358.7 701.6,359.1 702.8,359.4 703.9,359.8 705.0,360.2 706.1,360.6 707.2,361.0 708.3,361.4 709.4,361.8 710.6,362.3 711.7,362.7 712.8,363.1 713.9,363.6 715.0,364.0 716.1,364.5 717.2,364.9 718.3,365.4 719.5,365.9 720.6,366.3 721.7,366.8 722.8,367.3 723.9,367.8 725.0,368.3 726.1,368.8 727.3,369.3 728.4,369.8 729.5,370.4 730.6,370.9 731.7,371.4 732.8,372.0 733.9,372.5 735.0,373.1 736.2,373.6 737.3,374.2 738.4,374.8 739.5,375.4 740.6,375.9 741.7,376.5 742.8,377.1 743.9,377.7 745.1,378.3 746.2,379.0 747.3,379.6 748.4,380.2 749.5,380.8 750.6,381.5 751.7,382.1 752.9,382.7 754.0,383.4 755.1,384.0 756.2,384.7 757.3,385.4 758.4,386.0 759.5,386.7 760.6,387.4 761.8,388.1 762.9,388.8 764.0,389.5 765.1,390.2 766.2,390.9 767.3,391.6 768.4,392.3 769.5,393.0 770.7,393.8 771.8,394.5 772.9,395.2 774.0,396.0 775.1,396.7 776.2,397.5 777.3,398.2 778.5,399.0 779.6,399.7 780.7,400.5 781.8,401.3 782.9,402.0 784.0,402.8 785.1,403.6 786.2,404.4 787.4,405.2 788.5,406.0 789.6,406.8 790.7,407.6 791.8,408.4 792.9,409.2 794.0,410.1 795.1,410.9 796.3,411.7 797.4,412.5 798.5,413.4 799.6,414.2 800.7,415.1 801.8,415.9 802.9,416.8 804.1,417.6 805.2,418.5 806.3,419.3 807.4,420.2 808.5,421.1 809.6,421.9 810.7,422.8 811.8,423.7 813.0,424.6 814.1,425.5 815.2,426.3 816.3,427.2 817.4,428.1 818.5,429.0 819.6,429.9 820.8,430.8 821.9,431.7 823.0,432.7 824.1,433.6 825.2,434.5 826.3,435.4 827.4,436.3 828.5,437.3 829.7,438.2 830.8,439.1 831.9,440.0 833.0,441.0 834.1,441.9 835.2,442.9 836.3,443.8 837.4,444.7 838.6,445.7 839.7,446.6 840.8,447.6 841.9,448.6 843.0,449.5 844.1,450.5 845.2,451.4 846.4,452.4 847.5,453.4 848.6,454.3 849.7,455.3 850.8,456.3 851.9,457.2 853.0,458.2 854.1,459.2 855.3,460.2 856.4,461.1 857.5,462.1 858.6,463.1 859.7,464.1 860.8,465.1 861.9,466.1 863.0,467.1 864.2,468.0 865.3,469.0 866.4,470.0 867.5,471.0 868.6,472.0 869.7,473.0 870.8,474.0 872.0,475.0 873.1,476.0 874.2,477.0 875.3,478.0 876.4,479.0 877.5,480.0 878.6,481.0 879.7,482.0 880.9,483.0 882.0,484.0 883.1,485.0 884.2,486.0 885.3,487.0 886.4,488.0 887.5,489.0 888.6,490.0 889.8,491.0 890.9,492.0 892.0,493.1 893.1,494.1 894.2,495.1 895.3,496.1 896.4,497.1 897.6,498.1 898.7,499.1 899.8,500.1 900.9,501.1 902.0,502.1 903.1,503.1 904.2,504.1 905.3,505.1 906.5,506.1 907.6,507.1 908.7,508.1 909.8,509.1 910.9,510.1 912.0,511.1 913.1,512.1 914.3,513.1 915.4,514.1 916.5,515.1 917.6,516.1 918.7,517.1 919.8,518.1 920.9,519.1 922.0,520.1 923.2,521.0 924.3,522.0 925.4,523.0 926.5,524.0 927.6,525.0 928.7,526.0 929.8,526.9 930.9,527.9 932.1,528.9 933.2,529.9 934.3,530.8 935.4,531.8 936.5,532.8 937.6,533.8 938.7,534.7 939.9,535.7 941.0,536.6 942.1,537.6 943.2,538.6 944.3,539.5 945.4,540.5 946.5,541.4 947.6,542.4 948.8,543.3 949.9,544.3 951.0,545.2 952.1,546.1 953.2,547.1 954.3,548.0 955.4,548.9 956.5,549.9 957.7,550.8 958.8,551.7 959.9,552.6 961.0,553.5 962.1,554.5 963.2,555.4 964.3,556.3 965.5,557.2 966.6,558.1 967.7,559.0 968.8,559.9 969.9,560.8 971.0,561.7 972.1,562.5 973.2,563.4 974.4,564.3 975.5,565.2 976.6,566.0 977.7,566.9 978.8,567.8 979.9,568.6 981.0,569.5 982.1,570.4 983.3,571.2 984.4,572.1 985.5,572.9 986.6,573.7 987.7,574.6 988.8,575.4 989.9,576.2 991.1,577.1 992.2,577.9 993.3,578.7 994.4,579.5 995.5,580.3 996.6,581.1 997.7,581.9 998.8,582.7 1000.0,583.5 1001.1,584.3 1002.2,585.1 1003.3,585.8 1004.4,586.6 1005.5,587.4 1006.6,588.1 1007.8,588.9 1008.9,589.7 1010.0,590.4 1011.1,591.1 1012.2,591.9 1013.3,592.6 1014.4,593.4 1015.5,594.1 1016.7,594.8 1017.8,595.5 1018.9,596.2 1020.0,596.9 1021.1,597.6 1022.2,598.3 1023.3,599.0 1024.4,599.7 1025.6,600.4 1026.7,601.1 1027.8,601.7 1028.9,602.4 1030.0,603.1 1031.1,603.7 1032.2,604.4 1033.4,605.0 1034.5,605.6 1035.6,606.3 1036.7,606.9 1037.8,607.5 1038.9,608.1 1040.0,608.8 1041.1,609.4 1042.3,610.0 1043.4,610.6 1044.5,611.1 1045.6,611.7 1046.7,612.3 1047.8,612.9 1048.9,613.4 1050.0,614.0 1051.2,614.6 1052.3,615.1 1053.4,615.6 1054.5,616.2 1055.6,616.7 1056.7,617.2 1057.8,617.8 1059.0,618.3 1060.1,618.8 1061.2,619.3 1062.3,619.8 1063.4,620.3 1064.5,620.7 1065.6,621.2 1066.7,621.7 1067.9,622.2 1069.0,622.6 1070.1,623.1 1071.2,623.5 1072.3,624.0 1073.4,624.4 1074.5,624.8 1075.6,625.2 1076.8,625.6 1077.9,626.1 1079.0,626.5 1080.1,626.8 1081.2,627.2 1082.3,627.6 1083.4,628.0 1084.6,628.4 1085.7,628.7 1086.8,629.1 1087.9,629.4 1089.0,629.8 1090.1,630.1 1091.2,630.4 1092.3,630.8 1093.5,631.1 1094.6,631.4 1095.7,631.7 1096.8,632.0 1097.9,632.3 1099.0,632.6 1100.1,632.8 1101.3,633.1 1102.4,633.4 1103.5,633.6 1104.6,633.9 1105.7,634.1 1106.8,634.3 1107.9,634.6 1109.0,634.8 1110.2,635.0 1111.3,635.2 1112.4,635.4 1113.5,635.6 1114.6,635.8 1115.7,636.0 1116.8,636.2 1117.9,636.3 1119.1,636.5 1120.2,636.6 1121.3,636.8 1122.4,636.9 1123.5,637.0 1124.6,637.2 1125.7,637.3 1126.9,637.4 1128.0,637.5 1129.1,637.6 1130.2,637.7 1131.3,637.8 1132.4,637.9 1133.5,637.9 1134.6,638.0 1135.8,638.0 1136.9,638.1 1138.0,638.1 1139.1,638.2 1140.2,638.2 1141.3,638.2 1142.4,638.2 1143.5,638.2 1144.7,638.2 1145.8,638.2 1146.9,638.2 1148.0,638.2 1149.1,638.2 1150.2,638.1 1151.3,638.1 1152.5,638.0 1153.6,638.0 1154.7,637.9 1155.8,637.9 1156.9,637.8 1158.0,637.7 1159.1,637.6 1160.2,637.5 1161.4,637.4 1162.5,637.3 1163.6,637.2 1164.7,637.0 1165.8,636.9 1166.9,636.8 1168.0,636.6 1169.1,636.5 1170.3,636.3 1171.4,636.1 1172.5,636.0 1173.6,635.8 1174.7,635.6 1175.8,635.4 1176.9,635.2 1178.1,635.0 1179.2,634.8 1180.3,634.6 1181.4,634.3 1182.5,634.1 1183.6,633.9 1184.7,633.6 1185.8,633.3 1187.0,633.1 1188.1,632.8 1189.2,632.5 1190.3,632.3 1191.4,632.0 1192.5,631.7 1193.6,631.4 1194.8,631.1 1195.9,630.7 1197.0,630.4 1198.1,630.1 1199.2,629.8 1200.3,629.4 1201.4,629.1 1202.5,628.7 1203.7,628.3 1204.8,628.0 1205.9,627.6 1207.0,627.2 1208.1,626.8 1209.2,626.4 1210.3,626.0 1211.4,625.6 1212.6,625.2 1213.7,624.8 1214.8,624.4 1215.9,623.9 1217.0,623.5 1218.1,623.0 1219.2,622.6 1220.4,622.1 1221.5,621.7 1222.6,621.2 1223.7,620.7 1224.8,620.2 1225.9,619.8 1227.0,619.3 1228.1,618.8 1229.3,618.3 1230.4,617.7 1231.5,617.2 1232.6,616.7 1233.7,616.2 1234.8,615.6 1235.9,615.1 1237.0,614.5 1238.2,614.0 1239.3,613.4 1240.4,612.9 1241.5,612.3" stroke="#0000d8"/></g><path d="M236 560h5v1h-5zM236 561h5v1h-5zM238 562h3v1h-3zM238 563h3v1h-3zM238 564h3v1h-3zM238 565h3v1h-3zM238 566h3v1h-3zM238 567h3v1h-3zM238 568h3v1h-3zM238 569h3v1h-3zM238 570h3v1h-3zM238 571h3v1h-3zM238 572h3v1h-3zM238 573h3v1h-3zM238 574h3v1h-3zM238 575h3v1h-3zM238 576h3v1h-3zM238 577h3v1h-3zM238 578h3v1h-3zM238 579h3v1h-3zM238 580h3v1h-3zM238 581h3v1h-3zM238 582h3v1h-3zM238 583h3v1h-3zM238 584h3v1h-3zM238 585h3v1h-3zM238 586h3v1h-3zM238 587h3v1h-3zM238 588h3v1h-3zM238 589h3v1h-3zM238 590h3v1h-3zM238 591h3v1h-3zM238 592h3v1h-3zM238 593h3v1h-3zM238 594h3v1h-3zM238 595h3v1h-3zM238 596h3v1h-3zM238 597h3v1h-3zM238 598h3v1h-3zM238 599h3v1h-3zM238 600h3v1h-3zM238 601h3v1h-3zM238 602h3v1h-3zM238 603h3v1h-3zM238 604h3v1h-3zM238 605h3v1h-3zM238 606h3v1h-3zM238 607h3v1h-3z" fill="#0000d8" shape-rendering="crispEdges"/></svg>
<svg class="a" style="left:0;top:0" width="1280" height="884" viewBox="0 0 1280 884"><clipPath id="axclip"><rect x="150" y="211" width="1130" height="640"/></clipPath><g clip-path="url(#axclip)" font-family="Liberation Sans,sans-serif" font-size="16.6" fill="#000" stroke="#000" stroke-width=".3" paint-order="stroke"><text x="170.39 182.69 190.39" y="220.95" transform="translate(0 215.00) scale(1 1.125) translate(0 -215.00)">5.5</text><text x="170.39 182.69 190.39" y="267.20" transform="translate(0 261.25) scale(1 1.125) translate(0 -261.25)">5.0</text><text x="170.39 182.69 190.39" y="313.45" transform="translate(0 307.50) scale(1 1.125) translate(0 -307.50)">4.5</text><text x="170.39 182.69 190.39" y="359.70" transform="translate(0 353.75) scale(1 1.125) translate(0 -353.75)">4.0</text><text x="170.39 182.69 190.39" y="405.95" transform="translate(0 400.00) scale(1 1.125) translate(0 -400.00)">3.5</text><text x="170.39 182.69 190.39" y="452.20" transform="translate(0 446.25) scale(1 1.125) translate(0 -446.25)">3.0</text><text x="170.39 182.69 190.39" y="498.45" transform="translate(0 492.50) scale(1 1.125) translate(0 -492.50)">2.5</text><text x="170.39 182.69 190.39" y="544.70" transform="translate(0 538.75) scale(1 1.125) translate(0 -538.75)">2.0</text><text x="170.39 182.69 190.39" y="590.95" transform="translate(0 585.00) scale(1 1.125) translate(0 -585.00)">1.5</text><text x="170.39 182.69 190.39" y="637.20" transform="translate(0 631.25) scale(1 1.125) translate(0 -631.25)">1.0</text><text x="170.39 182.69 190.39" y="683.45" transform="translate(0 677.50) scale(1 1.125) translate(0 -677.50)">0.5</text><text x="170.39 182.69 190.39" y="729.70" transform="translate(0 723.75) scale(1 1.125) translate(0 -723.75)">0.0</text><text x="170.15 180.39 192.69 200.39" y="775.95" transform="translate(0 770.00) scale(1 1.125) translate(0 -770.00)">−0.5</text><text x="221.39 233.69 241.39" y="810.45" transform="translate(0 804.50) scale(1 1.125) translate(0 -804.50)">0.0</text><text x="316.89 326.89 339.19 346.89" y="810.45" transform="translate(0 804.50) scale(1 1.125) translate(0 -804.50)">50.0</text><text x="412.39 422.39 432.39 444.69 452.39" y="810.45" transform="translate(0 804.50) scale(1 1.125) translate(0 -804.50)">100.0</text><text x="512.89 522.89 532.89 545.19 552.89" y="810.45" transform="translate(0 804.50) scale(1 1.125) translate(0 -804.50)">150.0</text><text x="613.39 623.39 633.39 645.69 653.39" y="810.45" transform="translate(0 804.50) scale(1 1.125) translate(0 -804.50)">200.0</text><text x="713.89 723.89 733.89 746.19 753.89" y="810.45" transform="translate(0 804.50) scale(1 1.125) translate(0 -804.50)">250.0</text><text x="814.39 824.39 834.39 846.69 854.39" y="810.45" transform="translate(0 804.50) scale(1 1.125) translate(0 -804.50)">300.0</text><text x="914.89 924.89 934.89 947.19 954.89" y="810.45" transform="translate(0 804.50) scale(1 1.125) translate(0 -804.50)">350.0</text><text x="1015.39 1025.39 1035.39 1047.69 1055.39" y="810.45" transform="translate(0 804.50) scale(1 1.125) translate(0 -804.50)">400.0</text><text x="1115.89 1125.89 1135.89 1148.19 1155.89" y="810.45" transform="translate(0 804.50) scale(1 1.125) translate(0 -804.50)">450.0</text><text x="1216.39 1226.39 1236.39 1248.69 1256.39" y="810.45" transform="translate(0 804.50) scale(1 1.125) translate(0 -804.50)">500.0</text></g></svg>
<div class="t mono" style="left:694px;top:817.5px;font-size:16.67px;color:#000;-webkit-text-stroke:.45px #000">time (ns)</div>
<svg class="a" style="left:150px;top:455px" width="40" height="80" viewBox="150 455 40 80"><text font-family="Liberation Mono,monospace" fill="#000" stroke="#000" stroke-width=".5" paint-order="stroke" transform="translate(168 0) scale(.82 1) translate(-168 0)"><tspan x="162.4" y="518.6" font-size="17.8">V</tspan> <tspan x="164.2" y="496.4" font-size="14">(</tspan><tspan x="162.4" y="488.6" font-size="17.8">V</tspan><tspan x="163.4" y="476" font-size="14">)</tspan></text></svg>
<div class="t serif" style="left:15px;top:161px;font-size:14.1px;color:#111">Transient Response</div><div class="t serif" style="left:1102px;top:161px;font-size:14.25px;color:#111">Tue Sep 12 23:39:06 2023</div><div class="t serif" style="left:1261.2px;top:161px;font-size:14.25px;color:#111">1</div>
<div class="a" style="left:10px;top:180px;width:134px;height:20px;background:linear-gradient(#c4c4c4,#b4b4b4 50%,#a2a2a2)"></div><div class="a" style="left:111px;top:182px;width:1px;height:18px;background:#8a8a8a"></div><div class="a" style="left:112px;top:182px;width:1px;height:18px;background:#d0d0d0"></div><div class="t" style="left:11px;top:184px;font-size:11.4px;color:#1a1a1a">Name</div><div class="t" style="left:114px;top:184px;font-size:11.4px;color:#1a1a1a">Vis</div>
<div class="a" style="left:116px;top:216px;width:26px;height:18px;background:#fff;border-right:2px solid #b0b0b0;border-bottom:2px solid #b0b0b0"></div><svg class="a" style="left:14px;top:234px" width="10" height="34" viewBox="0 0 10 34" shape-rendering="crispEdges"><path d="M2.5 1V32M3 10.5H9M3 31.5H7" stroke="#444" stroke-width="1" stroke-dasharray="1 1" fill="none"/></svg><div class="a" style="left:25px;top:239px;width:15px;height:10px;background:#ff0000"></div><div class="a" style="left:25px;top:260px;width:15px;height:10px;background:#0000ff"></div><div class="t serif" style="left:46px;top:237px;font-size:14.6px;letter-spacing:-.12px;color:#111">/Vin</div><div class="t serif" style="left:46px;top:258px;font-size:14.6px;letter-spacing:-.05px;color:#111">/Vout</div>
<svg class="a" style="left:0;top:0" width="1280" height="884" viewBox="0 0 1280 884"><rect x="236.5" y="183.5" width="14" height="23" rx="2" fill="url(#gOvBtn)" stroke="#858585" stroke-width="1"/><rect x="1225.5" y="183.5" width="14" height="23" rx="2" fill="url(#gOvBtn)" stroke="#858585" stroke-width="1"/><path d="M238.6 193.8L243.8 190.6V197Z" fill="#c40000"/><path d="M1235.4 193.8L1230.2 190.6V197Z" fill="#c40000"/><rect x="248" y="180" width="980" height="30" rx="4.5" fill="url(#gOvBody)"/><rect x="248.5" y="180.5" width="979" height="29" rx="4" fill="none" stroke="#b9bec4" stroke-width="1" opacity=".7"/><rect x="260" y="182.5" width="956" height="24.5" rx="3.5" fill="url(#gOvTrack)"/><path d="M253.5 188V202M255.5 188V202M1220.5 188V202M1222.5 188V202" stroke="#000" stroke-width="1" shape-rendering="crispEdges"/><g clip-path="inset(0)"><path d="M260.5 194.5H278.5V193.5H294.5V192.5H312.5V191.5H330.5V190.5H350.5V189.5H372.5V188.5H396.5V187.5H428.5V186.5H492.5V185.5H508.5V186.5H572.5V187.5H604.5V188.5H628.5V189.5H650.5V190.5H670.5V191.5H688.5V192.5H706.5V193.5H722.5V194.5H740.5V195.5H756.5V196.5H774.5V197.5H790.5V198.5H810.5V199.5H828.5V200.5H850.5V201.5H874.5V202.5H906.5V203.5H1050.5V202.5H1082.5V201.5H1106.5V200.5H1128.5V199.5H1146.5V198.5H1166.5V197.5H1182.5V196.5H1200.5V195.5H1216.5V194.5" stroke="#ffd8d8" stroke-width="3" fill="none" opacity=".55" shape-rendering="crispEdges"/><path d="M260.5 194.5H278.5V193.5H294.5V192.5H312.5V191.5H330.5V190.5H350.5V189.5H372.5V188.5H396.5V187.5H428.5V186.5H492.5V185.5H508.5V186.5H572.5V187.5H604.5V188.5H628.5V189.5H650.5V190.5H670.5V191.5H688.5V192.5H706.5V193.5H722.5V194.5H740.5V195.5H756.5V196.5H774.5V197.5H790.5V198.5H810.5V199.5H828.5V200.5H850.5V201.5H874.5V202.5H906.5V203.5H1050.5V202.5H1082.5V201.5H1106.5V200.5H1128.5V199.5H1146.5V198.5H1166.5V197.5H1182.5V196.5H1200.5V195.5H1216.5V194.5" stroke="#9c1c1c" stroke-width="1" fill="none" shape-rendering="crispEdges"/><path d="M260.5 197.5H260.5V199.5H272.5V198.5H312.5V197.5H346.5V196.5H374.5V195.5H402.5V194.5H430.5V193.5H460.5V192.5H490.5V191.5H524.5V190.5H570.5V189.5H720.5V190.5H766.5V191.5H800.5V192.5H830.5V193.5H858.5V194.5H886.5V195.5H914.5V196.5H942.5V197.5H972.5V198.5H1006.5V199.5H1054.5V200.5H1196.5V199.5H1216.5V199.5" stroke="#dcdcff" stroke-width="3" fill="none" opacity=".55" shape-rendering="crispEdges"/><path d="M260.5 197.5H260.5V199.5H272.5V198.5H312.5V197.5H346.5V196.5H374.5V195.5H402.5V194.5H430.5V193.5H460.5V192.5H490.5V191.5H524.5V190.5H570.5V189.5H720.5V190.5H766.5V191.5H800.5V192.5H830.5V193.5H858.5V194.5H886.5V195.5H914.5V196.5H942.5V197.5H972.5V198.5H1006.5V199.5H1054.5V200.5H1196.5V199.5H1216.5V199.5" stroke="#141490" stroke-width="1" fill="none" shape-rendering="crispEdges"/></g></svg>
<svg class="a" style="left:236px;top:759px" width="17" height="14" viewBox="0 0 17 14"><rect x=".5" y="1.5" width="15" height="11" fill="#fff" stroke="#9a9a9a"/><path d="M6 3.5v7l6-3.5z" fill="#9b9b9b"/></svg>
<div id="sb2" class="a"></div><div id="sb1" class="a"></div><div class="h" style="left:4px;top:852px;height:9px;width:5px;opacity:.7"></div><div class="t f" style="left:9.87px;top:850px;font-size:10.9px;letter-spacing:0.288px;color:#1a1a1a;">mouse L:</div><div class="t f" style="left:633.38px;top:850px;font-size:10.9px;letter-spacing:0.680px;color:#1a1a1a;">M:</div><div class="t f" style="left:1260.45px;top:850px;font-size:10.9px;letter-spacing:-0.290px;color:#1a1a1a;">R:</div><div class="t f" style="left:2.32px;top:871px;font-size:10.9px;letter-spacing:0.067px;color:#1a1a1a;">59(88)</div><div class="a" style="left:40px;top:866px;width:1px;height:18px;background:#555"></div><div class="a" style="left:1264px;top:869px;width:7px;height:15px;background:#9a9a9a;border:1px solid #7d7d7d"></div><div class="a" style="left:1272px;top:868px;width:1px;height:16px;background:#777"></div>
<svg class="a" style="left:0;top:0" width="1280" height="884" viewBox="0 0 1280 884"><defs>
<linearGradient id="gWin" x1="0" y1="0" x2="0" y2="1"><stop offset="0" stop-color="#f0f0f0"/><stop offset="1" stop-color="#dcdcdc"/></linearGradient>
<linearGradient id="gFold" x1="0" y1="0" x2="0" y2="1"><stop offset="0" stop-color="#f7d58f"/><stop offset="1" stop-color="#e2a85c"/></linearGradient>
<linearGradient id="gPaper" x1="0" y1="0" x2="0" y2="1"><stop offset="0" stop-color="#ffffff"/><stop offset="1" stop-color="#dedede"/></linearGradient>
<linearGradient id="gFlop" x1="0" y1="0" x2="0" y2="1"><stop offset="0" stop-color="#8c9cd0"/><stop offset="1" stop-color="#52659f"/></linearGradient>
<linearGradient id="gFrame" x1="0" y1="0" x2="1" y2="1"><stop offset="0" stop-color="#cfa040"/><stop offset="1" stop-color="#8a5c10"/></linearGradient>
<linearGradient id="gUndo" x1="0" y1="0" x2="1" y2="1"><stop offset="0" stop-color="#fad4a8"/><stop offset=".5" stop-color="#eea050"/><stop offset="1" stop-color="#c87020"/></linearGradient>
<linearGradient id="gClip" x1="0" y1="0" x2="0" y2="1"><stop offset="0" stop-color="#b85a00"/><stop offset=".45" stop-color="#cc7418"/><stop offset="1" stop-color="#f0c090"/></linearGradient>
<linearGradient id="gBall" x1="0" y1="0" x2="0" y2="1"><stop offset="0" stop-color="#dcdcdc"/><stop offset=".5" stop-color="#d2d2d4"/><stop offset=".55" stop-color="#b9bdca"/><stop offset="1" stop-color="#aeb4c6"/></linearGradient>
<radialGradient id="gLens" cx=".5" cy=".5" r=".6"><stop offset="0" stop-color="#6ea2d8"/><stop offset="1" stop-color="#5580b0"/></radialGradient>
<radialGradient id="gLens2" cx=".4" cy=".3" r=".8"><stop offset="0" stop-color="#e8f2fc"/><stop offset=".5" stop-color="#9fc4ea"/><stop offset="1" stop-color="#5b93d2"/></radialGradient>
<radialGradient id="gLens3" cx=".45" cy=".4" r=".7"><stop offset="0" stop-color="#f0e4f0"/><stop offset="1" stop-color="#c9c0d8"/></radialGradient>
<linearGradient id="gLens4" x1="0" y1="0" x2="0" y2="1"><stop offset="0" stop-color="#b9c9da"/><stop offset=".5" stop-color="#93abc6"/><stop offset="1" stop-color="#6484a8"/></linearGradient>
<linearGradient id="gPanel" x1="0" y1="0" x2="0" y2="1"><stop offset="0" stop-color="#b4cdf0"/><stop offset="1" stop-color="#eaf1fb"/></linearGradient>
<linearGradient id="gGreen" x1="0" y1="0" x2="0" y2="1"><stop offset="0" stop-color="#74dc5c"/><stop offset="1" stop-color="#2ca42c"/></linearGradient>
<linearGradient id="gInfo" x1="0" y1="0" x2="0" y2="1"><stop offset="0" stop-color="#2e2e2e"/><stop offset="1" stop-color="#9a9a9a"/></linearGradient>
<linearGradient id="gFlag" x1="0" y1="0" x2="1" y2="0"><stop offset="0" stop-color="#c41818"/><stop offset=".3" stop-color="#ee5a5a"/><stop offset=".55" stop-color="#c81818"/><stop offset=".8" stop-color="#e85050"/><stop offset="1" stop-color="#c01010"/></linearGradient>
<linearGradient id="gOvBody" x1="0" y1="0" x2="0" y2="1"><stop offset="0" stop-color="#fdfdfd"/><stop offset=".12" stop-color="#f1f2f4"/><stop offset=".5" stop-color="#d7dade"/><stop offset=".85" stop-color="#a4abb3"/><stop offset="1" stop-color="#969da6"/></linearGradient>
<linearGradient id="gOvTrack" x1="0" y1="0" x2="0" y2="1"><stop offset="0" stop-color="#b9b9b9"/><stop offset=".12" stop-color="#d2d2d2"/><stop offset=".5" stop-color="#f6f6f6"/><stop offset=".62" stop-color="#ffffff"/><stop offset="1" stop-color="#d6d6d6"/></linearGradient>
<linearGradient id="gOvBtn" x1="0" y1="0" x2="0" y2="1"><stop offset="0" stop-color="#e4e4e4"/><stop offset=".5" stop-color="#f7f7f7"/><stop offset="1" stop-color="#d2d2d2"/></linearGradient>
<linearGradient id="gFunnel" x1="0" y1="0" x2="1" y2="0"><stop offset="0" stop-color="#e08a38"/><stop offset=".5" stop-color="#f4b070"/><stop offset="1" stop-color="#d47a28"/></linearGradient>
<linearGradient id="gHandle" x1="0" y1="0" x2="1" y2="1"><stop offset="0" stop-color="#d08a3c"/><stop offset="1" stop-color="#a85a10"/></linearGradient>
</defs><rect x="9" y="6" width="14" height="13" fill="#bcc6ea"/><rect x="9" y="6" width="14" height="3" fill="#eef0fa"/><rect x="9" y="17" width="14" height="2" fill="#dfe4f4"/><path d="M9.4 12.6L9.5 11.9L9.7 11.2L9.8 10.5L10.0 9.9L10.1 9.3L10.2 8.9L10.4 8.5L10.5 8.2L10.7 8.1L10.8 8.0L10.9 8.1L11.1 8.2L11.2 8.5L11.4 8.9L11.5 9.3L11.6 9.9L11.8 10.5L11.9 11.2L12.1 11.9L12.2 12.6L12.3 13.3L12.5 14.0L12.6 14.7L12.8 15.3L12.9 15.9L13.0 16.3L13.2 16.7L13.3 17.0L13.5 17.1L13.6 17.2L13.7 17.1L13.9 17.0L14.0 16.7L14.2 16.3L14.3 15.9L14.4 15.3L14.6 14.7L14.7 14.0L14.9 13.3L15.0 12.6" stroke="#a43a5e" stroke-width="1.1" fill="none" stroke-linecap="round"/><path d="M16.4 12.6L16.6 11.8L16.7 11.1L16.9 10.4L17.0 9.8L17.2 9.2L17.3 8.7L17.5 8.3L17.6 8.0L17.8 7.9L17.9 7.8L18.1 7.9L18.3 8.0L18.4 8.3L18.6 8.7L18.7 9.2L18.9 9.8L19.0 10.4L19.2 11.1L19.3 11.8L19.5 12.6L19.7 13.4L19.8 14.1L20.0 14.8L20.1 15.4L20.3 16.0L20.4 16.5L20.6 16.9L20.7 17.2L20.9 17.3L21.1 17.4L21.2 17.3L21.4 17.2L21.5 16.9L21.7 16.5L21.8 16.0L22.0 15.4L22.1 14.8L22.3 14.1L22.4 13.4L22.6 12.6" stroke="#9c3458" stroke-width="1.1" fill="none" stroke-linecap="round"/><path d="M9.4 12.6L9.5 11.8L9.7 11.0L9.8 10.3L10.0 9.7L10.1 9.3L10.2 9.0L10.4 9.0L10.5 9.2L10.7 9.5L10.8 10.1L10.9 10.7L11.1 11.5L11.2 12.3L11.4 13.2L11.5 14.0L11.6 14.7L11.8 15.3L11.9 15.8L12.1 16.1L12.2 16.2L12.3 16.1L12.5 15.8L12.6 15.3L12.8 14.7L12.9 14.0L13.0 13.2L13.2 12.3L13.3 11.5L13.5 10.7L13.6 10.1L13.7 9.5L13.9 9.2L14.0 9.0L14.2 9.0L14.3 9.3L14.4 9.7L14.6 10.3L14.7 11.0L14.9 11.8L15.0 12.6" stroke="#5c64b0" stroke-width="0.7" fill="none" stroke-linecap="round"/><path d="M16.4 12.6L16.6 11.8L16.7 11.0L16.9 10.3L17.0 9.7L17.2 9.3L17.3 9.0L17.5 9.0L17.6 9.2L17.8 9.5L17.9 10.1L18.1 10.7L18.3 11.5L18.4 12.3L18.6 13.2L18.7 14.0L18.9 14.7L19.0 15.3L19.2 15.8L19.3 16.1L19.5 16.2L19.7 16.1L19.8 15.8L20.0 15.3L20.1 14.7L20.3 14.0L20.4 13.2L20.6 12.3L20.7 11.5L20.9 10.7L21.1 10.1L21.2 9.5L21.4 9.2L21.5 9.0L21.7 9.0L21.8 9.3L22.0 9.7L22.1 10.3L22.3 11.0L22.4 11.8L22.6 12.6" stroke="#5c64b0" stroke-width="0.7" fill="none" stroke-linecap="round"/><path d="M9 5.5H23M9 19.5H23" stroke="#5c5c5c" stroke-width="1"/><path d="M15.5 5V20" stroke="#343a52" stroke-width="1.1"/><rect x="12.5" y="68.5" width="18" height="16" rx="1.3" fill="url(#gWin)" stroke="#6c6c6c" stroke-width="1"/><rect x="13" y="69" width="17" height="2.2" fill="#8592a2"/><path d="M16.4 77.5L16.7 76.1L16.9 74.9L17.2 74.1L17.5 73.8L17.7 74.1L18.0 74.9L18.3 76.1L18.5 77.5L18.8 78.9L19.0 80.1L19.3 80.9L19.6 81.2L19.8 80.9L20.1 80.1L20.4 78.9L20.6 77.5L20.9 76.1L21.2 74.9L21.4 74.1L21.7 73.8L22.0 74.1L22.2 74.9L22.5 76.1L22.8 77.5L23.0 78.9L23.3 80.1L23.6 80.9L23.8 81.2L24.1 80.9L24.4 80.1L24.6 78.9L24.9 77.5L25.1 76.1L25.4 74.9L25.7 74.1L25.9 73.8L26.2 74.1L26.5 74.9L26.7 76.1L27.0 77.5" stroke="#b0648c" stroke-width="1" fill="none" stroke-linecap="round"/><g opacity="1"><circle cx="29.5" cy="69.5" r="2.6" fill="#f6b878" opacity=".45"/><path d="M29.5 64V73.9M25.1 69.5H33.9" stroke="#e8a058" stroke-width=".8" fill="none"/><path d="M25.9 65.9l7.2 7.2M33.1 65.9l-7.2 7.2" stroke="#6e5238" stroke-width=".6" fill="none"/><path d="M29.5 63.7V68.3" stroke="#3e3024" stroke-width=".8" fill="none"/><circle cx="29.5" cy="69.5" r="1.5" fill="#f0ac6c"/></g><path d="M39.8 74h8.4l-4.2 4.4z" fill="#a00000" stroke="#f0c8c8" stroke-width=".5" stroke-opacity=".6"/><rect x="53.5" y="66.5" width="18" height="16" rx="1.3" fill="url(#gWin)" stroke="#6c6c6c" stroke-width="1"/><rect x="54" y="67" width="17" height="2.2" fill="#8592a2"/><path d="M62.5 69V82M54 74.5H71" stroke="#6c6c6c" stroke-width="1"/><rect x="61.5" y="74.5" width="11" height="9" rx="1.3" fill="url(#gWin)" stroke="#6c6c6c" stroke-width="1"/><rect x="62" y="75" width="10" height="1.5" fill="#8592a2"/><path d="M64.0 79.6L64.2 79.0L64.3 78.5L64.5 78.0L64.7 77.6L64.8 77.3L65.0 77.1L65.2 77.1L65.3 77.2L65.5 77.5L65.7 77.8L65.8 78.3L66.0 78.8L66.1 79.4L66.3 80.0L66.5 80.6L66.6 81.1L66.8 81.5L67.0 81.8L67.1 82.0L67.3 82.1L67.5 82.0L67.6 81.8L67.8 81.5L68.0 81.1L68.1 80.6L68.3 80.0L68.5 79.4L68.6 78.8L68.8 78.3L68.9 77.8L69.1 77.5L69.3 77.2L69.4 77.1L69.6 77.1L69.8 77.3L69.9 77.6L70.1 78.0L70.3 78.5L70.4 79.0L70.6 79.6" stroke="#b0648c" stroke-width="1" fill="none" stroke-linecap="round"/><g opacity="1"><circle cx="71.2" cy="74" r="2.21" fill="#f6b878" opacity=".45"/><path d="M71.2 69.325V77.74M67.46 74H74.94" stroke="#e8a058" stroke-width=".8" fill="none"/><path d="M68.14 70.94l6.12 6.12M74.26 70.94l-6.12 6.12" stroke="#6e5238" stroke-width=".6" fill="none"/><path d="M71.2 69.07V72.98" stroke="#3e3024" stroke-width=".8" fill="none"/><circle cx="71.2" cy="74" r="1.275" fill="#f0ac6c"/></g><path d="M80.8 74h8.4l-4.2 4.4z" fill="#a00000" stroke="#f0c8c8" stroke-width=".5" stroke-opacity=".6"/><path d="M95.5 81.5V68.2q0-1.2 1.2-1.2h4.6l1.6 2h8q1.2 0 1.2 1.2v3.3H100l-3 8z" fill="url(#gFold)" stroke="#b9772c" stroke-width="1" stroke-linejoin="round"/><path d="M100.2 73.6H114l-2.6 7.6H97.4z" fill="url(#gPaper)" stroke="#9c9c9c" stroke-width=".8" stroke-linejoin="round"/><rect x="128.5" y="68.5" width="15" height="15" rx=".6" fill="url(#gFlop)" stroke="#3e4e86" stroke-width="1"/><rect x="131.04" y="69" width="10.24" height="7.04" fill="#f3f3f6"/><rect x="132" y="77.92" width="8.96" height="5.08" fill="#cdd0da"/><rect x="133.44" y="78.88" width="2.08" height="3.84" fill="#5e6c9e"/><rect x="161.5" y="65.5" width="11" height="9" fill="#e2e2e2" stroke="#848484" stroke-width="1"/><path d="M160 73.5h14l2.5 3v6q0 1.2-1.2 1.2h-16.6q-1.2 0-1.2-1.2v-6z" fill="#dedede" stroke="#6e6e6e" stroke-width="1" stroke-linejoin="round"/><path d="M158.4 77.2h17.2" stroke="#fbfbfb" stroke-width="1.6"/><path d="M160.4 75.4h13.2" stroke="#8a8a8a" stroke-width=".9"/><path d="M159.6 80.6h14.8" stroke="#7e7e7e" stroke-width="1.1"/><path d="M158.4 82.6h17.2" stroke="#c6c6c6" stroke-width="1"/><path d="M187.6 70.6L197.4 66.2L207.4 70.6" stroke="#5e5e5e" stroke-width=".9" fill="none"/><circle cx="197.4" cy="65.9" r="2" fill="#262626"/><rect x="186.5" y="70.2" width="22" height="16" rx="1" fill="url(#gFrame)" stroke="#7e560e" stroke-width="1"/><rect x="189" y="72.6" width="17" height="11.2" fill="#f7f3f7"/><path d="M188 71.8l1.6 1.6M207 71.8l-1.6 1.6M188 84.6l1.6-1.6M207 84.6l-1.6-1.6" stroke="#e8c878" stroke-width="1"/><path d="M189.8 78.2L190.2 77.0L190.6 75.9L191.0 75.2L191.3 75.0L191.7 75.2L192.1 75.9L192.5 77.0L192.9 78.2L193.3 79.4L193.7 80.5L194.0 81.2L194.4 81.4L194.8 81.2L195.2 80.5L195.6 79.4L196.0 78.2L196.3 77.0L196.7 75.9L197.1 75.2L197.5 75.0L197.9 75.2L198.3 75.9L198.7 77.0L199.0 78.2L199.4 79.4L199.8 80.5L200.2 81.2L200.6 81.4L201.0 81.2L201.3 80.5L201.7 79.4L202.1 78.2L202.5 77.0L202.9 75.9L203.3 75.2L203.7 75.0L204.0 75.2L204.4 75.9L204.8 77.0L205.2 78.2" stroke="#a858ac" stroke-width="2.1" fill="none" stroke-linecap="round"/><path d="M231.3 73.8L235.4 69.4V72Q242.8 71.8 243 77.4Q242.8 81.8 236.6 82.9Q240.6 80.8 240.5 78.4Q240.2 75.8 235.4 75.8V78.2Z" fill="url(#gUndo)" stroke="#cc7c30" stroke-width=".7" stroke-linejoin="round"/><path d="M273.7 73.8L269.6 69.6V72Q262.6 71.8 262.4 77.4Q262.6 81.8 268 82.8Q264.8 80.8 264.9 78.4Q265.2 76 269.6 76V78.2Z" fill="#ead2ba" stroke="#dcc0a6" stroke-width=".7" stroke-linejoin="round" opacity=".95"/><path d="M297.4 77.4L293.6 79.4M299.2 77.2L302.2 77.6" stroke="#c0342a" stroke-width="2.2" stroke-linecap="round"/><ellipse cx="295.1" cy="81.3" rx="2" ry="1.6" transform="rotate(-35 295.1 81.3)" fill="#eca49c" stroke="#c4362a" stroke-width="1.9"/><ellipse cx="303.3" cy="79.4" rx="2" ry="1.6" transform="rotate(35 303.3 79.4)" fill="#eca49c" stroke="#c4362a" stroke-width="1.9"/><path d="M291.2 66.4Q295.8 70.2 300.2 76.6L297.8 78.2Q292.2 73.4 291.2 66.4Z" fill="#fbfbfb" stroke="#646464" stroke-width=".9" stroke-linejoin="round"/><path d="M303.2 65.6Q304.4 72.4 299.4 78L296.9 76.6Q301.4 70.2 303.2 65.6Z" fill="#efefef" stroke="#646464" stroke-width=".9" stroke-linejoin="round"/><rect x="324.5" y="71" width="8" height="10.4" fill="#e3e3e3" stroke="#b4b4b4" stroke-width="1"/><path d="M327.6 67.5H332.6L335.4 70.3V78.6H327.6Z" fill="#e6e6e6" stroke="#b4b4b4" stroke-width="1" stroke-linejoin="round"/><rect x="353.5" y="68" width="14" height="15.3" rx="1.4" fill="url(#gClip)" stroke="#9a5410" stroke-width="1"/><path d="M356.4 69.4Q356.6 67.6 358.6 67.4Q359 65.6 360.5 65.6Q362 65.6 362.4 67.4Q364.4 67.6 364.6 69.4Z" fill="#e8e8e8" stroke="#9a9a9a" stroke-width=".7"/><path d="M359.8 73.2H365.2L367.5 75.5V83.5H359.8Z" fill="url(#gPaper)" stroke="#8a8a8a" stroke-width="1" stroke-linejoin="round"/><path d="M386 69L397.2 80.2M397.2 69L386 80.2" stroke="#8a3c04" stroke-width="3.3" stroke-linecap="butt"/><path d="M386.5 69.5L396.7 79.7M396.7 69.5L386.5 79.7" stroke="#d87024" stroke-width="1.6" stroke-linecap="butt" stroke-dasharray="1.2 .8"/><circle cx="431" cy="74.8" r="7.5" fill="url(#gBall)" stroke="#a0a6b8" stroke-width="1.4"/><path d="M424.8 74.8L430.2 69.8V72.4H436.4V77.2H430.2V79.8Z" fill="#ebebeb" stroke="#dcdde2" stroke-width=".5"/><circle cx="462" cy="74.8" r="7.5" fill="url(#gBall)" stroke="#a0a6b8" stroke-width="1.4"/><path d="M468.2 74.8L462.8 69.8V72.4H456.6V77.2H462.8V79.8Z" fill="#ebebeb" stroke="#dcdde2" stroke-width=".5"/><g opacity="1"><path d="M494.7 77.2L499.8 82.6" stroke="#8a4a10" stroke-width="2.7" stroke-linecap="round"/><path d="M494.7 77.2L499.8 82.6" stroke="#e09a4c" stroke-width="1.7" stroke-linecap="butt" stroke-dasharray="1 1"/><circle cx="490.6" cy="72.8" r="5.7" fill="url(#gLens)" stroke="#6d7782" stroke-width="1.5"/></g><path d="M486.6 68.8h2.8l-2.8 2.8zM494.6 68.8h-2.8l2.8 2.8zM486.6 76.8h2.8l-2.8-2.8zM494.6 76.8h-2.8l2.8-2.8z" fill="#fff" stroke="#fff" stroke-width=".8" stroke-linejoin="round"/><g opacity="1"><path d="M525.7 77.7L530.4 82.8" stroke="#8a4a10" stroke-width="2.8" stroke-linecap="round"/><path d="M525.7 77.7L530.4 82.8" stroke="#e09a4c" stroke-width="1.8" stroke-linecap="butt" stroke-dasharray="1 1"/><circle cx="521.6" cy="73.2" r="5.8" fill="url(#gLens4)" stroke="#6d7782" stroke-width="1.5"/></g><path d="M521.6 69V77.4M517.4 73.2H525.8" stroke="#fff" stroke-width="2.6"/><text x="529.6" y="72.8" font-family="Liberation Sans,sans-serif" font-size="6.4" font-weight="bold" fill="#fff" stroke="#a4a4a4" stroke-width=".9" paint-order="stroke">2</text><g opacity="1"><path d="M556.6 77.7L561.4 82.8" stroke="#8a4a10" stroke-width="2.8" stroke-linecap="round"/><path d="M556.6 77.7L561.4 82.8" stroke="#e09a4c" stroke-width="1.8" stroke-linecap="butt" stroke-dasharray="1 1"/><circle cx="552.5" cy="73.2" r="5.8" fill="url(#gLens4)" stroke="#6d7782" stroke-width="1.5"/></g><path d="M548.2 72.2H556.8" stroke="#fff" stroke-width="2.6"/><text x="560.4" y="72.8" font-family="Liberation Sans,sans-serif" font-size="6.4" font-weight="bold" fill="#fff" stroke="#a4a4a4" stroke-width=".9" paint-order="stroke">2</text><path d="M575 71.5H577.5V65.5H581.5V71.5H584V65.5H588V71.5H590.5V65.5H594V71.5H596" stroke="#e0a4ac" stroke-width="1" fill="none" opacity=".9"/><g opacity="0.6"><path d="M590.6 80.8L596.0 86.4" stroke="#8a4a10" stroke-width="2.6" stroke-linecap="round"/><path d="M590.6 80.8L596.0 86.4" stroke="#e09a4c" stroke-width="1.6" stroke-linecap="butt" stroke-dasharray="1 1"/><circle cx="586.5" cy="76.6" r="5.6" fill="#dcdce4" stroke="#bcc0c8" stroke-width="1.5"/></g><path d="M583.5 78.5V74H585.5V78.5H587.5V74H589.5V78.5" stroke="#dca0b0" stroke-width="1" fill="none" opacity=".9"/><path d="M607.5 69.5V65.5H612M619 65.5H623.5V69.5M623.5 77V81.5H619M612 81.5H607.5V77" stroke="#47607a" stroke-width="1.4" fill="none"/><path d="M609.5 70.5V67.5H613M618 67.5H621.5V70.5M621.5 76V79.5H618M613 79.5H609.5V76" stroke="#5c7894" stroke-width="1" fill="none"/><g opacity="1"><path d="M619.6 77.7L624.8 83.2" stroke="#8a4a10" stroke-width="3.2" stroke-linecap="round"/><path d="M619.6 77.7L624.8 83.2" stroke="#e09a4c" stroke-width="2.2" stroke-linecap="butt" stroke-dasharray="1 1"/><circle cx="615.6" cy="73.4" r="5.6" fill="url(#gLens2)" stroke="#7a98bc" stroke-width="1.5"/></g><path d="M639.5 65V70M639.5 86V81" stroke="#1c4678" stroke-width="1.2"/><path d="M636.9 69.2h5.2l-2.6 2.8zM636.9 81.8h5.2l-2.6-2.8z" fill="#1c4678"/><path d="M638 75.5H640.5V73H643M653.5 73H655.5V75.5H658" stroke="#c8404c" stroke-width="1.2" fill="none"/><g opacity="1"><path d="M652.3 79.4L657.6 85.0" stroke="#8a4a10" stroke-width="3.2" stroke-linecap="round"/><path d="M652.3 79.4L657.6 85.0" stroke="#e09a4c" stroke-width="2.2" stroke-linecap="butt" stroke-dasharray="1 1"/><circle cx="648.4" cy="75.2" r="5.4" fill="url(#gLens3)" stroke="#8e9096" stroke-width="1.5"/></g><path d="M645 77.8H647V72.4H650V77.8H652" stroke="#b0508c" stroke-width="1.1" fill="none"/><path d="M670.5 65V70M670.5 86V81" stroke="#1c4678" stroke-width="1.2"/><path d="M667.9 69.2h5.2l-2.6 2.8zM667.9 81.8h5.2l-2.6-2.8z" fill="#1c4678"/><path d="M669 75.5H671.5V73H674M684.5 73H686.5V75.5H689" stroke="#c8404c" stroke-width="1.2" fill="none"/><g opacity="1"><path d="M683.3 79.4L688.6 85.0" stroke="#8a4a10" stroke-width="3.2" stroke-linecap="round"/><path d="M683.3 79.4L688.6 85.0" stroke="#e09a4c" stroke-width="2.2" stroke-linecap="butt" stroke-dasharray="1 1"/><circle cx="679.4" cy="75.2" r="5.4" fill="url(#gLens3)" stroke="#8e9096" stroke-width="1.5"/></g><path d="M676 77.8H678V72.4H681V77.8H683" stroke="#b0508c" stroke-width="1.1" fill="none"/><g opacity=".75"><circle cx="708.4" cy="73.2" r="7.6" fill="none" stroke="#b4b4b4" stroke-width="1"/><path d="M708.4 64.5V82.5M699.5 73.2H719.5" stroke="#c4c4c4" stroke-width=".8"/></g><g opacity="0.8"><path d="M714.2 81.3L719.4 86.6" stroke="#8a4a10" stroke-width="2.6" stroke-linecap="round"/><path d="M714.2 81.3L719.4 86.6" stroke="#e09a4c" stroke-width="1.6" stroke-linecap="butt" stroke-dasharray="1 1"/><circle cx="710.4" cy="77.4" r="5.2" fill="#d6dce4" stroke="#b4b8be" stroke-width="1.5"/></g><rect x="819.5" y="67.5" width="19" height="7" fill="url(#gPanel)" stroke="#6f8fc4" stroke-width="1" opacity="1"/><rect x="819.5" y="77.5" width="19" height="7" fill="url(#gPanel)" stroke="#6f8fc4" stroke-width="1" opacity="1"/><path d="M826 71.6L829 70.4L830.5 71L833 69.2" stroke="#cc2030" stroke-width="1.4" fill="none" stroke-linejoin="round" stroke-linecap="round"/><path d="M826 78.4L828.6 80L830 79.4L832.6 81.4" stroke="#10308c" stroke-width="1.4" fill="none" stroke-linejoin="round" stroke-linecap="round"/><g transform="translate(818.4 65.8) rotate(-135)" opacity="1"><path d="M0 0L-3.7 -3.7L-3.7 -1.7L-7.8 -1.7L-7.8 1.7L-3.7 1.7L-3.7 3.7Z" fill="none" stroke="#eefaea" stroke-width="2.2" stroke-linejoin="round" opacity=".8"/><path d="M0 0L-3.7 -3.7L-3.7 -1.7L-7.8 -1.7L-7.8 1.7L-3.7 1.7L-3.7 3.7Z" fill="url(#gGreen)" stroke="#1f8a1f" stroke-width=".8" stroke-linejoin="round"/></g><g transform="translate(840 65.8) rotate(-45)" opacity="1"><path d="M0 0L-3.7 -3.7L-3.7 -1.7L-7.8 -1.7L-7.8 1.7L-3.7 1.7L-3.7 3.7Z" fill="none" stroke="#eefaea" stroke-width="2.2" stroke-linejoin="round" opacity=".8"/><path d="M0 0L-3.7 -3.7L-3.7 -1.7L-7.8 -1.7L-7.8 1.7L-3.7 1.7L-3.7 3.7Z" fill="url(#gGreen)" stroke="#1f8a1f" stroke-width=".8" stroke-linejoin="round"/></g><g transform="translate(818.4 86) rotate(135)" opacity="1"><path d="M0 0L-3.7 -3.7L-3.7 -1.7L-7.8 -1.7L-7.8 1.7L-3.7 1.7L-3.7 3.7Z" fill="none" stroke="#eefaea" stroke-width="2.2" stroke-linejoin="round" opacity=".8"/><path d="M0 0L-3.7 -3.7L-3.7 -1.7L-7.8 -1.7L-7.8 1.7L-3.7 1.7L-3.7 3.7Z" fill="url(#gGreen)" stroke="#1f8a1f" stroke-width=".8" stroke-linejoin="round"/></g><g transform="translate(840 86) rotate(45)" opacity="1"><path d="M0 0L-3.7 -3.7L-3.7 -1.7L-7.8 -1.7L-7.8 1.7L-3.7 1.7L-3.7 3.7Z" fill="none" stroke="#eefaea" stroke-width="2.2" stroke-linejoin="round" opacity=".8"/><path d="M0 0L-3.7 -3.7L-3.7 -1.7L-7.8 -1.7L-7.8 1.7L-3.7 1.7L-3.7 3.7Z" fill="url(#gGreen)" stroke="#1f8a1f" stroke-width=".8" stroke-linejoin="round"/></g><rect x="849.5" y="67.5" width="21" height="7" fill="url(#gPanel)" stroke="#6f8fc4" stroke-width="1" opacity="1"/><rect x="849.5" y="77.5" width="21" height="7" fill="url(#gPanel)" stroke="#6f8fc4" stroke-width="1" opacity="1"/><path d="M860.6 71.2L863.4 68.6L866 71.4L868 70L869.6 73" stroke="#cc2030" stroke-width="1.4" fill="none" stroke-linejoin="round" stroke-linecap="round"/><path d="M850.6 81L852.6 83L856.6 78.6L859 80.6L862.6 80.6" stroke="#10308c" stroke-width="1.4" fill="none" stroke-linejoin="round" stroke-linecap="round"/><g transform="translate(858.8 74.6) rotate(45)" opacity="1"><path d="M0 0L-3.7 -3.7L-3.7 -1.7L-7.8 -1.7L-7.8 1.7L-3.7 1.7L-3.7 3.7Z" fill="none" stroke="#eefaea" stroke-width="2.2" stroke-linejoin="round" opacity=".8"/><path d="M0 0L-3.7 -3.7L-3.7 -1.7L-7.8 -1.7L-7.8 1.7L-3.7 1.7L-3.7 3.7Z" fill="url(#gGreen)" stroke="#1f8a1f" stroke-width=".8" stroke-linejoin="round"/></g><g transform="translate(862.4 76.2) rotate(-135)" opacity="1"><path d="M0 0L-3.7 -3.7L-3.7 -1.7L-7.8 -1.7L-7.8 1.7L-3.7 1.7L-3.7 3.7Z" fill="none" stroke="#eefaea" stroke-width="2.2" stroke-linejoin="round" opacity=".8"/><path d="M0 0L-3.7 -3.7L-3.7 -1.7L-7.8 -1.7L-7.8 1.7L-3.7 1.7L-3.7 3.7Z" fill="url(#gGreen)" stroke="#1f8a1f" stroke-width=".8" stroke-linejoin="round"/></g><rect x="880.5" y="68.5" width="21" height="15" fill="url(#gPanel)" stroke="#6f8fc4" stroke-width="1" opacity="1"/><path d="M887.6 73.2L891.6 72.6L894.6 70.6L897.4 74.6L899.6 74.4L901 72" stroke="#cc2030" stroke-width="1.4" fill="none" stroke-linejoin="round" stroke-linecap="round"/><path d="M881.4 78.6L883.6 80L886.4 76.6L888.4 76.2L891.6 78.6L894 78.6" stroke="#10308c" stroke-width="1.4" fill="none" stroke-linejoin="round" stroke-linecap="round"/><g transform="translate(884.4 65.8) rotate(-90)" opacity="1"><path d="M0 0L-3.7 -3.7L-3.7 -1.7L-8.8 -1.7L-8.8 1.7L-3.7 1.7L-3.7 3.7Z" fill="none" stroke="#eefaea" stroke-width="2.2" stroke-linejoin="round" opacity=".8"/><path d="M0 0L-3.7 -3.7L-3.7 -1.7L-8.8 -1.7L-8.8 1.7L-3.7 1.7L-3.7 3.7Z" fill="url(#gGreen)" stroke="#1f8a1f" stroke-width=".8" stroke-linejoin="round"/></g><g transform="translate(897.4 86.2) rotate(90)" opacity="1"><path d="M0 0L-3.7 -3.7L-3.7 -1.7L-8.8 -1.7L-8.8 1.7L-3.7 1.7L-3.7 3.7Z" fill="none" stroke="#eefaea" stroke-width="2.2" stroke-linejoin="round" opacity=".8"/><path d="M0 0L-3.7 -3.7L-3.7 -1.7L-8.8 -1.7L-8.8 1.7L-3.7 1.7L-3.7 3.7Z" fill="url(#gGreen)" stroke="#1f8a1f" stroke-width=".8" stroke-linejoin="round"/></g><g opacity=".7"><rect x="911.5" y="69.5" width="21.6" height="15" fill="#d3dcec" stroke="#9cacd0" stroke-width="1"/><path d="M920 79.5H933M912 74.5H916" stroke="#a8b4d0" stroke-width="1"/><path d="M912.6 74.4H915.6" stroke="#d86c7c" stroke-width="1.1"/><path d="M912.6 78.5q1.8 4 3.8 0M927.6 73.6q1.8 4 3.8 0" stroke="#7c8cb8" stroke-width="1.2" fill="none"/><path d="M927.6 73.6q1.8 4 3.8 0" stroke="#d87c8c" stroke-width="1.2" fill="none"/></g><path d="M928.6 70.6L923.6 65.2V67.8Q917.6 67.6 917 72.6Q916.8 76.6 922 79Q920 76.4 920.6 74.2Q921 72.6 923.6 72.6V75.6Z" fill="#ecd09c" stroke="#e0c08c" stroke-width=".6" stroke-linejoin="round"/><circle cx="929.4" cy="82.6" r="4.1" fill="#7cb87c" stroke="#9ccc9c" stroke-width=".6"/><path d="M929.4 80V85.2M926.8 82.6H932" stroke="#eef8ee" stroke-width="1.3"/><g opacity=".7"><rect x="942.5" y="69.5" width="21.6" height="15" fill="#d3dcec" stroke="#9cacd0" stroke-width="1"/><path d="M951 79.5H964M943 74.5H947" stroke="#a8b4d0" stroke-width="1"/><path d="M943.6 74.4H946.6" stroke="#d86c7c" stroke-width="1.1"/><path d="M943.6 78.5q1.8 4 3.8 0M958.6 73.6q1.8 4 3.8 0" stroke="#7c8cb8" stroke-width="1.2" fill="none"/><path d="M958.6 73.6q1.8 4 3.8 0" stroke="#d87c8c" stroke-width="1.2" fill="none"/></g><path d="M959.6 70.6L954.6 65.2V67.8Q948.6 67.6 948 72.6Q947.8 76.6 953 79Q951 76.4 951.6 74.2Q952 72.6 954.6 72.6V75.6Z" fill="#ecd09c" stroke="#e0c08c" stroke-width=".6" stroke-linejoin="round"/><rect x="1000.5" y="67.5" width="19" height="19" fill="#e6e6ea" stroke="#8688ae" stroke-width="1" shape-rendering="crispEdges"/><path d="M1006.5 68V86M1013.5 68V86M1001 73.5H1019M1001 80.5H1019" stroke="#9496b8" stroke-width="1" shape-rendering="crispEdges"/><path d="M13.6 114.6L23.4 105.6" stroke="#000" stroke-width="4" stroke-linecap="butt"/><path d="M22.6 106.4L27.4 102" stroke="#8c8c8c" stroke-width="4.4" stroke-linecap="butt"/><path d="M22.8 106.2L27 102.4" stroke="#fbfbfb" stroke-width="3.2" stroke-linecap="butt"/><path d="M20.60 96.10L21.33 97.59L22.98 97.83L21.79 98.99L22.07 100.62L20.60 99.85L19.13 100.62L19.41 98.99L18.22 97.83L19.87 97.59Z" fill="#88a8f0" stroke="#4c74d8" stroke-width=".9" stroke-linejoin="round"/><path d="M32.40 99.10L33.13 100.59L34.78 100.83L33.59 101.99L33.87 103.62L32.40 102.85L30.93 103.62L31.21 101.99L30.02 100.83L31.67 100.59Z" fill="#f0808c" stroke="#d83c4c" stroke-width=".9" stroke-linejoin="round"/><path d="M28.40 105.10L29.13 106.59L30.78 106.83L29.59 107.99L29.87 109.62L28.40 108.85L26.93 109.62L27.21 107.99L26.02 106.83L27.67 106.59Z" fill="#e4a0ec" stroke="#b858c8" stroke-width=".9" stroke-linejoin="round"/><g stroke="#7c7c74" stroke-width=".8" stroke-linejoin="round"><path d="M42.6 102.4L50.4 98.4L55.6 109.6L48.4 113.4Z" fill="#f4f0ec"/><path d="M49 97.6L57.6 97L58.6 111.4L50 112Z" fill="#faf8f6"/><path d="M57.6 96L65.8 100L60.2 112.6L52 108.6Z" fill="#faf6f4"/></g><circle cx="46.8" cy="104.2" r="1.2" fill="#e05858"/><circle cx="50.4" cy="110" r="1" fill="#e05858"/><path d="M51.6 100.6v3.2M50 102.2h3.2" stroke="#222" stroke-width="1.1"/><circle cx="58.4" cy="101.6" r="1.3" fill="#e46464"/><circle cx="62.4" cy="101.4" r="1" fill="#e46464"/><circle cx="56" cy="105.6" r="1.3" fill="#e46464"/><circle cx="59.4" cy="108.2" r="1.1" fill="#e46464"/><rect x="77.5" y="97.5" width="15" height="7" rx="1.3" fill="#dedede" stroke="#6c6c6c" stroke-width="1"/><rect x="78" y="98" width="14" height="1.8" fill="#8592a2"/><rect x="77.5" y="106.5" width="15" height="7" rx="1.3" fill="#dedede" stroke="#6c6c6c" stroke-width="1"/><rect x="78" y="107" width="14" height="1.8" fill="#8592a2"/><rect x="107.5" y="98.5" width="7" height="16" rx="1.3" fill="#e0e0e0" stroke="#6c6c6c" stroke-width="1"/><rect x="108" y="99" width="6" height="1.8" fill="#8592a2"/><rect x="117.5" y="98.5" width="7" height="16" rx="1.3" fill="#e0e0e0" stroke="#6c6c6c" stroke-width="1"/><rect x="118" y="99" width="6" height="1.8" fill="#8592a2"/><rect x="137.5" y="95.5" width="8" height="6" rx="1.2" fill="#bcc3d5"/><rect x="137.5" y="103.5" width="8" height="6" rx="1.2" fill="#bcc3d5"/><rect x="137.5" y="111.5" width="8" height="6" rx="1.2" fill="#bcc3d5"/><rect x="148.5" y="95.5" width="8" height="6" rx="1.2" fill="#bcc3d5"/><rect x="148.5" y="103.5" width="8" height="6" rx="1.2" fill="#bcc3d5"/><rect x="148.5" y="111.5" width="8" height="6" rx="1.2" fill="#bcc3d5"/><path d="M138 95h1v1h-1zM140 95h1v1h-1zM142 95h1v1h-1zM144 95h1v1h-1zM138 101h1v1h-1zM140 101h1v1h-1zM142 101h1v1h-1zM144 101h1v1h-1zM137 96h1v1h-1zM137 98h1v1h-1zM137 100h1v1h-1zM145 96h1v1h-1zM145 98h1v1h-1zM145 100h1v1h-1zM138 103h1v1h-1zM140 103h1v1h-1zM142 103h1v1h-1zM144 103h1v1h-1zM138 109h1v1h-1zM140 109h1v1h-1zM142 109h1v1h-1zM144 109h1v1h-1zM137 104h1v1h-1zM137 106h1v1h-1zM137 108h1v1h-1zM145 104h1v1h-1zM145 106h1v1h-1zM145 108h1v1h-1zM138 111h1v1h-1zM140 111h1v1h-1zM142 111h1v1h-1zM144 111h1v1h-1zM138 117h1v1h-1zM140 117h1v1h-1zM142 117h1v1h-1zM144 117h1v1h-1zM137 112h1v1h-1zM137 114h1v1h-1zM137 116h1v1h-1zM145 112h1v1h-1zM145 114h1v1h-1zM145 116h1v1h-1zM149 95h1v1h-1zM151 95h1v1h-1zM153 95h1v1h-1zM155 95h1v1h-1zM149 101h1v1h-1zM151 101h1v1h-1zM153 101h1v1h-1zM155 101h1v1h-1zM148 96h1v1h-1zM148 98h1v1h-1zM148 100h1v1h-1zM156 96h1v1h-1zM156 98h1v1h-1zM156 100h1v1h-1zM149 103h1v1h-1zM151 103h1v1h-1zM153 103h1v1h-1zM155 103h1v1h-1zM149 109h1v1h-1zM151 109h1v1h-1zM153 109h1v1h-1zM155 109h1v1h-1zM148 104h1v1h-1zM148 106h1v1h-1zM148 108h1v1h-1zM156 104h1v1h-1zM156 106h1v1h-1zM156 108h1v1h-1zM149 111h1v1h-1zM151 111h1v1h-1zM153 111h1v1h-1zM155 111h1v1h-1zM149 117h1v1h-1zM151 117h1v1h-1zM153 117h1v1h-1zM155 117h1v1h-1zM148 112h1v1h-1zM148 114h1v1h-1zM148 116h1v1h-1zM156 112h1v1h-1zM156 114h1v1h-1zM156 116h1v1h-1z" fill="#0a0a0a" shape-rendering="crispEdges"/><path d="M311.6 99V112.4" stroke="#5a5a5a" stroke-width="1.2"/><path d="M312.2 100.4Q315 99 318 100.8Q321 102.4 324 100.8V109.6Q321 111.4 318 109.8Q315 108.2 312.2 109.4Z" fill="url(#gFlag)" stroke="#b41818" stroke-width=".6"/><path d="M343.4 97.2H356.6Q359.2 97.2 359.2 99.8V108Q359.2 110.6 356.6 110.6H349.4L343.4 115.2L345 110.6H343.4Q340.8 110.6 340.8 108V99.8Q340.8 97.2 343.4 97.2Z" fill="url(#gInfo)" stroke="#d9c66e" stroke-width="1.5" stroke-linejoin="round"/><text x="348.2" y="108.6" font-family="Liberation Serif,serif" font-size="12" font-style="italic" font-weight="bold" fill="#fff">i</text><path d="M385.4 103.4L391.2 97.4V100.6H398.8V106.2H391.2V109.4Z" fill="#aeb8d6" stroke="#9ea8cc" stroke-width=".8" stroke-linejoin="round"/><path d="M379 108.2H383.6V114.2H399" stroke="#86b486" stroke-width="1.5" fill="none"/><path d="M423.8 103.4L418 97.4V100.6H410.4V106.2H418V109.4Z" fill="#aeb8d6" stroke="#9ea8cc" stroke-width=".8" stroke-linejoin="round"/><path d="M410 114.2H425.6V108.2H430" stroke="#86b486" stroke-width="1.5" fill="none"/><g opacity=".8"><rect x="690" y="107" width="3" height="7.6" fill="#b8c0dc" stroke="#a4acd0" stroke-width=".6"/><rect x="693.2" y="102" width="3" height="12.6" fill="#9cd8a4" stroke="#88c890" stroke-width=".6"/><rect x="696.4" y="99" width="3" height="15.6" fill="#ecb4b4" stroke="#dca0a0" stroke-width=".6"/><rect x="699.6" y="95.4" width="3" height="19.2" fill="#c4cce4" stroke="#acb4d4" stroke-width=".6"/><rect x="702.8" y="102" width="3" height="12.6" fill="#9cd8a4" stroke="#88c890" stroke-width=".6"/><rect x="706.2" y="111" width="2" height="3.6" fill="#f0c4a4"/><rect x="688" y="114.2" width="22" height="1.8" fill="#dca4a4"/></g><rect x="730.6" y="96.6" width="14" height="16" fill="#ececec" stroke="#707070" stroke-width="1"/><rect x="732.4" y="98.4" width="10.4" height="2.4" fill="#181c18"/><rect x="733.6" y="100.2" width="8" height="1.4" fill="#88e050" opacity=".8"/><rect x="732.6" y="103.6" width="1.7" height="1.5" fill="#8c8c8c"/><rect x="735.4" y="103.6" width="1.7" height="1.5" fill="#8c8c8c"/><rect x="738.2" y="103.6" width="1.7" height="1.5" fill="#8c8c8c"/><rect x="741" y="103.6" width="1.7" height="1.5" fill="#8c8c8c"/><rect x="732.6" y="106.5" width="1.7" height="1.5" fill="#8c8c8c"/><rect x="735.4" y="106.5" width="1.7" height="1.5" fill="#8c8c8c"/><rect x="738.2" y="106.5" width="1.7" height="1.5" fill="#8c8c8c"/><rect x="741" y="106.5" width="1.7" height="1.5" fill="#8c8c8c"/><rect x="732.6" y="109.4" width="1.7" height="1.5" fill="#8c8c8c"/><rect x="735.4" y="109.4" width="1.7" height="1.5" fill="#8c8c8c"/><rect x="738.2" y="109.4" width="1.7" height="1.5" fill="#8c8c8c"/><rect x="741" y="109.4" width="1.7" height="1.5" fill="#8c8c8c"/><rect x="915.5" y="97.5" width="14" height="11" rx="1.3" fill="#ededed" stroke="#6c6c6c" stroke-width="1"/><rect x="916" y="98" width="13" height="1.6" fill="#8592a2"/><path d="M917.4 102.6H927.4M917.4 105.6H927.4" stroke="#7c7c7c" stroke-width="1"/><rect x="924.7" y="104.7" width="8.6" height="8.6" rx=".6" fill="url(#gFlop)" stroke="#3e4e86" stroke-width="1"/><rect x="926.024" y="105.2" width="6.144" height="4.224" fill="#f3f3f6"/><rect x="926.6" y="110.152" width="5.376" height="2.648" fill="#cdd0da"/><rect x="927.464" y="110.728" width="1.248" height="2.304" fill="#5e6c9e"/><rect x="946.5" y="96.5" width="14" height="11" rx="1.3" fill="#e9e9e9" stroke="#6c6c6c" stroke-width="1"/><rect x="947" y="97" width="13" height="1.6" fill="#8592a2"/><path d="M948.6 108.2Q954.8 101.36 961 108.2Q954.8 115.04 948.6 108.2Z" fill="#e9edf6" stroke="#50649a" stroke-width="1"/><circle cx="954.8" cy="108.2" r="2.592" fill="#8ea2d0" stroke="#5a6ea6" stroke-width=".6"/><circle cx="954.8" cy="108.2" r="1.224" fill="#2c3c74"/><circle cx="962.4" cy="111.2" r="3.6" fill="#d85858" stroke="#e89090" stroke-width=".5"/><path d="M960.4 111.2H964.4" stroke="#fff" stroke-width="1.3"/><rect x="8" y="126" width="16" height="16" fill="#c4c4c4"/><rect x="10" y="128" width="13" height="13" fill="#a8a8a8"/><rect x="10" y="128" width="12" height="12" fill="#fff"/><path d="M10.6 128V139.4H22" stroke="#000" stroke-width="1.3" fill="none"/><path d="M11.4 136.6L18 130.2" stroke="#000" stroke-width="1" stroke-dasharray="1.6 .8" fill="none"/><path d="M122.2 219.2H136L130.6 225.4V230.4L127.6 231.8V225.4Z" fill="url(#gFunnel)" stroke="#cc7c2c" stroke-width=".6" stroke-linejoin="round"/><path d="M118.1 243.8Q124.3 236.39 130.5 243.8Q124.3 251.21 118.1 243.8Z" fill="#e9edf6" stroke="#50649a" stroke-width="1"/><circle cx="124.3" cy="243.8" r="2.808" fill="#8ea2d0" stroke="#5a6ea6" stroke-width=".6"/><circle cx="124.3" cy="243.8" r="1.326" fill="#2c3c74"/><path d="M118.1 264.8Q124.3 257.39 130.5 264.8Q124.3 272.21 118.1 264.8Z" fill="#e9edf6" stroke="#50649a" stroke-width="1"/><circle cx="124.3" cy="264.8" r="2.808" fill="#8ea2d0" stroke="#5a6ea6" stroke-width=".6"/><circle cx="124.3" cy="264.8" r="1.326" fill="#2c3c74"/></svg>
<div class="a" style="left:1278px;top:0;width:2px;height:884px;background:#3d3d3d"></div>
</body></html>
